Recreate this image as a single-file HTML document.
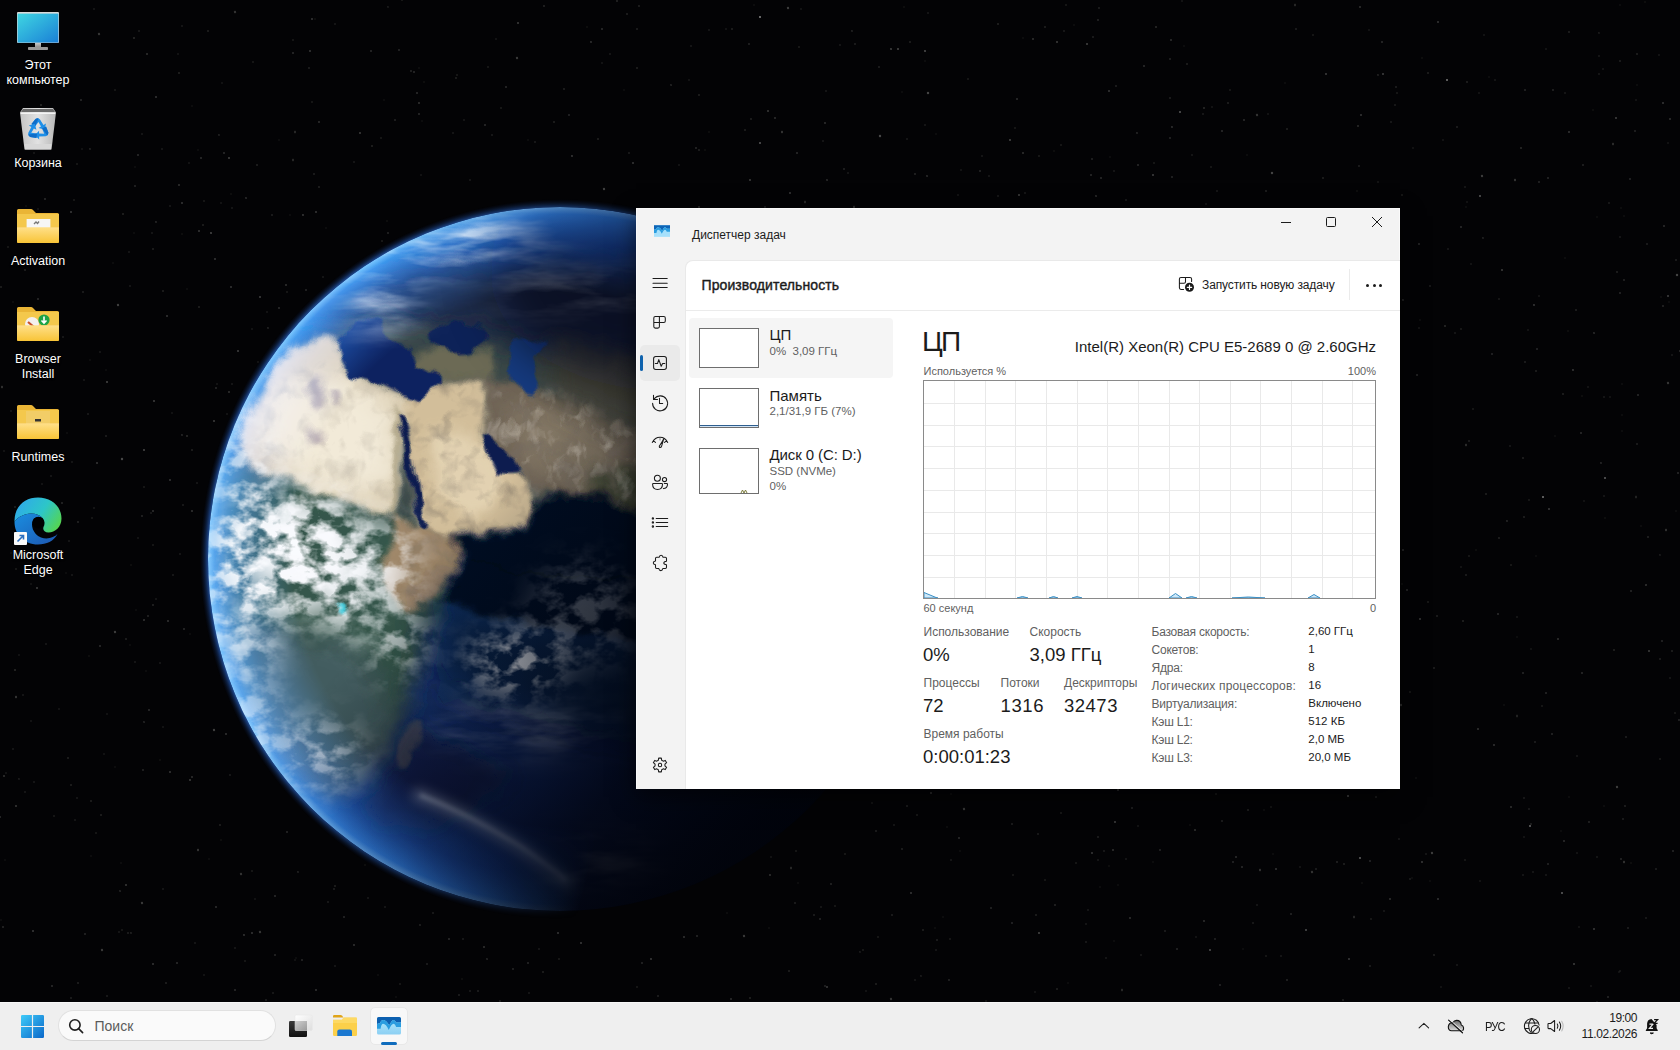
<!DOCTYPE html>
<html><head><meta charset="utf-8">
<style>
*{box-sizing:border-box;margin:0;padding:0}
html,body{width:1680px;height:1050px;overflow:hidden;background:#030305;font-family:"Liberation Sans",sans-serif}
.a{position:absolute;white-space:nowrap}
#earth{position:absolute;left:0;top:0}
/* window */
#win{position:absolute;left:636px;top:208px;width:764px;height:581px;background:#f3f3f3;border:1px solid #fafafa;border-bottom:0;box-shadow:0 8px 22px rgba(0,0,0,.55)}
.t{position:absolute;white-space:nowrap;color:#1b1b1b;line-height:1}
.g{color:#5f5f5f}
.dl{color:#fff;text-shadow:0 1px 2px rgba(0,0,0,.9)}
/* taskbar */
#tb{position:absolute;left:0;top:1002px;width:1680px;height:48px;background:#efefef;border-top:1px solid #f7f7f7}
</style></head><body>
<!--EARTH--><svg class="a" style="left:0;top:0" width="1680" height="1050" viewBox="0 0 1680 1050">
<defs>
<clipPath id="ec"><circle cx="560" cy="559" r="352"/></clipPath>
<radialGradient id="ocean" cx="330" cy="430" r="620" gradientUnits="userSpaceOnUse">
 <stop offset="0" stop-color="#1b4390"/><stop offset="0.45" stop-color="#173a82"/><stop offset="0.75" stop-color="#0d2260"/><stop offset="1" stop-color="#050c28"/>
</radialGradient>
<linearGradient id="night" x1="360" y1="380" x2="800" y2="780" gradientUnits="userSpaceOnUse">
 <stop offset="0.3" stop-color="#01030a" stop-opacity="0"/>
 <stop offset="0.52" stop-color="#01030a" stop-opacity="0.4"/>
 <stop offset="0.78" stop-color="#01030a" stop-opacity="0.82"/>
 <stop offset="1" stop-color="#01030a" stop-opacity="0.95"/>
</linearGradient>
<radialGradient id="limb" cx="560" cy="559" r="352" gradientUnits="userSpaceOnUse">
 <stop offset="0.76" stop-color="#1e5ac0" stop-opacity="0"/>
 <stop offset="0.9" stop-color="#1e5ac0" stop-opacity="0.6"/>
 <stop offset="0.98" stop-color="#2f80e8" stop-opacity="0.95"/>
 <stop offset="1" stop-color="#6fb8ff" stop-opacity="1"/>
</radialGradient>
<radialGradient id="glow" cx="560" cy="559" r="360" gradientUnits="userSpaceOnUse">
 <stop offset="0.975" stop-color="#2a6ad0" stop-opacity="0.85"/>
 <stop offset="1" stop-color="#0a1a40" stop-opacity="0"/>
</radialGradient>
<linearGradient id="litmask" x1="260" y1="520" x2="700" y2="640" gradientUnits="userSpaceOnUse">
 <stop offset="0.1" stop-color="#fff"/><stop offset="0.5" stop-color="#fff" stop-opacity="0.6"/><stop offset="0.9" stop-color="#fff" stop-opacity="0"/>
</linearGradient>
<mask id="lit"><rect x="0" y="0" width="1680" height="1050" fill="url(#litmask)"/></mask>
<filter id="disp" x="150" y="150" width="800" height="800" filterUnits="userSpaceOnUse">
 <feTurbulence type="fractalNoise" baseFrequency="0.04" numOctaves="3" seed="2" result="t"/>
 <feDisplacementMap in="SourceGraphic" in2="t" scale="16" xChannelSelector="R" yChannelSelector="G"/>
</filter>
<filter id="b1s" x="0" y="0" width="1680" height="1050" filterUnits="userSpaceOnUse"><feGaussianBlur stdDeviation=".5"/></filter>
<filter id="reliefL" x="150" y="150" width="800" height="800" filterUnits="userSpaceOnUse">
 <feGaussianBlur in="SourceGraphic" stdDeviation="6" result="m"/>
 <feTurbulence type="fractalNoise" baseFrequency="0.07 0.05" numOctaves="3" seed="9" result="n"/>
 <feColorMatrix in="n" type="matrix" values="0 0 0 0 0.85  0 0 0 0 0.8  0 0 0 0 0.72  2.6 0 0 0 -1.35" result="c"/>
 <feComposite in="c" in2="m" operator="in"/>
</filter>
<filter id="b1"><feGaussianBlur stdDeviation="1"/></filter>
<filter id="b2" x="-20%" y="-20%" width="140%" height="140%"><feGaussianBlur stdDeviation="2"/></filter>
<filter id="b3" x="-20%" y="-20%" width="140%" height="140%"><feGaussianBlur stdDeviation="3"/></filter>
<filter id="b6" x="-30%" y="-30%" width="160%" height="160%"><feGaussianBlur stdDeviation="6"/></filter>
<filter id="b12" x="-50%" y="-50%" width="200%" height="200%"><feGaussianBlur stdDeviation="12"/></filter>
<filter id="b24" x="-50%" y="-50%" width="200%" height="200%"><feGaussianBlur stdDeviation="24"/></filter>
<filter id="cloudtex" x="150" y="150" width="800" height="800" filterUnits="userSpaceOnUse">
 <feGaussianBlur in="SourceGraphic" stdDeviation="18" result="m"/>
 <feTurbulence type="fractalNoise" baseFrequency="0.045 0.06" numOctaves="4" seed="11" result="n"/>
 <feColorMatrix in="n" type="matrix" values="0 0 0 0 0.94  0 0 0 0 0.95  0 0 0 0 0.98  4.2 0 0 0 -1.75" result="c"/>
 <feComposite in="c" in2="m" operator="in"/>
</filter>
<filter id="cloudtex2" x="150" y="150" width="800" height="800" filterUnits="userSpaceOnUse">
 <feGaussianBlur in="SourceGraphic" stdDeviation="16" result="m"/>
 <feTurbulence type="fractalNoise" baseFrequency="0.04 0.055" numOctaves="4" seed="23" result="n"/>
 <feColorMatrix in="n" type="matrix" values="0 0 0 0 0.95  0 0 0 0 0.96  0 0 0 0 0.99  4.0 0 0 0 -1.55" result="c"/>
 <feComposite in="c" in2="m" operator="in"/>
</filter>
<filter id="streaks" x="150" y="150" width="800" height="800" filterUnits="userSpaceOnUse">
 <feGaussianBlur in="SourceGraphic" stdDeviation="16" result="m"/>
 <feTurbulence type="fractalNoise" baseFrequency="0.012 0.05" numOctaves="4" seed="4" result="n"/>
 <feColorMatrix in="n" type="matrix" values="0 0 0 0 0.85  0 0 0 0 0.9  0 0 0 0 0.98  3 0 0 0 -1.25" result="c"/>
 <feComposite in="c" in2="m" operator="in"/>
</filter>
<filter id="relief" x="150" y="150" width="800" height="800" filterUnits="userSpaceOnUse">
 <feGaussianBlur in="SourceGraphic" stdDeviation="4" result="m"/>
 <feTurbulence type="fractalNoise" baseFrequency="0.05" numOctaves="3" seed="5" result="n"/>
 <feColorMatrix in="n" type="matrix" values="0 0 0 0 0.18  0 0 0 0 0.15  0 0 0 0 0.12  2.0 0 0 0 -0.95" result="c"/>
 <feComposite in="c" in2="m" operator="in"/>
</filter>
</defs>
<g filter="url(#b1s)"><circle cx="1074" cy="25" r="0.8" fill="rgb(29,29,29)"/><circle cx="1237" cy="678" r="0.7" fill="rgb(57,57,57)"/><circle cx="709" cy="30" r="1.0" fill="rgb(27,27,27)"/><circle cx="45" cy="199" r="1.0" fill="rgb(43,43,43)"/><circle cx="1360" cy="7" r="1.0" fill="rgb(51,51,51)"/><circle cx="572" cy="156" r="0.9" fill="rgb(63,63,63)"/><circle cx="156" cy="97" r="1.0" fill="rgb(53,53,53)"/><circle cx="1356" cy="731" r="1.2" fill="rgb(38,38,38)"/><circle cx="1393" cy="620" r="1.0" fill="rgb(54,54,54)"/><circle cx="1184" cy="46" r="0.8" fill="rgb(27,27,27)"/><circle cx="134" cy="233" r="0.8" fill="rgb(23,23,23)"/><circle cx="1068" cy="366" r="0.8" fill="rgb(32,32,32)"/><circle cx="449" cy="939" r="1.0" fill="rgb(43,43,43)"/><circle cx="1662" cy="641" r="1.0" fill="rgb(39,39,39)"/><circle cx="1416" cy="778" r="0.7" fill="rgb(27,27,27)"/><circle cx="354" cy="945" r="0.9" fill="rgb(56,56,56)"/><circle cx="1101" cy="396" r="0.9" fill="rgb(59,59,59)"/><circle cx="943" cy="263" r="1.1" fill="rgb(40,40,40)"/><circle cx="1676" cy="511" r="0.7" fill="rgb(23,23,23)"/><circle cx="184" cy="629" r="0.9" fill="rgb(50,50,50)"/><circle cx="107" cy="382" r="1.0" fill="rgb(71,71,71)"/><circle cx="1631" cy="863" r="1.1" fill="rgb(19,19,19)"/><circle cx="1145" cy="538" r="1.0" fill="rgb(28,28,28)"/><circle cx="187" cy="436" r="1.2" fill="rgb(35,35,35)"/><circle cx="1471" cy="264" r="0.8" fill="rgb(36,36,36)"/><circle cx="1533" cy="872" r="1.0" fill="rgb(29,29,29)"/><circle cx="1023" cy="153" r="1.0" fill="rgb(48,48,48)"/><circle cx="1308" cy="531" r="0.9" fill="rgb(18,18,18)"/><circle cx="33" cy="931" r="1.1" fill="rgb(56,56,56)"/><circle cx="517" cy="58" r="1.2" fill="rgb(56,56,56)"/><circle cx="144" cy="487" r="1.1" fill="rgb(22,22,22)"/><circle cx="1287" cy="129" r="1.0" fill="rgb(35,35,35)"/><circle cx="711" cy="212" r="1.1" fill="rgb(38,38,38)"/><circle cx="1672" cy="651" r="1.0" fill="rgb(34,34,34)"/><circle cx="203" cy="225" r="1.0" fill="rgb(31,31,31)"/><circle cx="387" cy="221" r="1.0" fill="rgb(22,22,22)"/><circle cx="385" cy="907" r="0.7" fill="rgb(54,54,54)"/><circle cx="360" cy="133" r="1.0" fill="rgb(61,61,61)"/><circle cx="1357" cy="191" r="0.9" fill="rgb(23,23,23)"/><circle cx="1225" cy="675" r="0.7" fill="rgb(68,68,68)"/><circle cx="1448" cy="249" r="0.9" fill="rgb(26,26,26)"/><circle cx="420" cy="925" r="1.1" fill="rgb(34,34,34)"/><circle cx="925" cy="51" r="1.1" fill="rgb(73,73,73)"/><circle cx="1628" cy="928" r="0.8" fill="rgb(54,54,54)"/><circle cx="816" cy="214" r="0.7" fill="rgb(33,33,33)"/><circle cx="637" cy="987" r="1.1" fill="rgb(28,28,28)"/><circle cx="1608" cy="997" r="1.1" fill="rgb(39,39,39)"/><circle cx="260" cy="297" r="1.0" fill="rgb(65,65,65)"/><circle cx="911" cy="749" r="1.0" fill="rgb(22,22,22)"/><circle cx="845" cy="854" r="1.2" fill="rgb(25,25,25)"/><circle cx="135" cy="186" r="1.0" fill="rgb(40,40,40)"/><circle cx="395" cy="120" r="0.8" fill="rgb(57,57,57)"/><circle cx="999" cy="621" r="1.0" fill="rgb(33,33,33)"/><circle cx="878" cy="937" r="1.1" fill="rgb(26,26,26)"/><circle cx="1128" cy="301" r="1.1" fill="rgb(30,30,30)"/><circle cx="122" cy="459" r="1.2" fill="rgb(72,72,72)"/><circle cx="123" cy="214" r="1.2" fill="rgb(28,28,28)"/><circle cx="1480" cy="881" r="0.8" fill="rgb(32,32,32)"/><circle cx="1401" cy="705" r="1.2" fill="rgb(41,41,41)"/><circle cx="1099" cy="8" r="0.8" fill="rgb(51,51,51)"/><circle cx="1114" cy="941" r="0.8" fill="rgb(24,24,24)"/><circle cx="180" cy="554" r="1.0" fill="rgb(29,29,29)"/><circle cx="1206" cy="204" r="0.8" fill="rgb(42,42,42)"/><circle cx="821" cy="907" r="0.7" fill="rgb(53,53,53)"/><circle cx="6" cy="773" r="0.8" fill="rgb(42,42,42)"/><circle cx="1245" cy="553" r="0.7" fill="rgb(34,34,34)"/><circle cx="126" cy="885" r="1.0" fill="rgb(58,58,58)"/><circle cx="1402" cy="584" r="0.8" fill="rgb(25,25,25)"/><circle cx="1337" cy="862" r="0.8" fill="rgb(57,57,57)"/><circle cx="419" cy="103" r="1.1" fill="rgb(49,49,49)"/><circle cx="260" cy="932" r="1.2" fill="rgb(55,55,55)"/><circle cx="1362" cy="883" r="1.1" fill="rgb(20,20,20)"/><circle cx="558" cy="933" r="1.1" fill="rgb(51,51,51)"/><circle cx="1362" cy="267" r="0.8" fill="rgb(50,50,50)"/><circle cx="1465" cy="860" r="1.1" fill="rgb(27,27,27)"/><circle cx="1336" cy="228" r="0.8" fill="rgb(20,20,20)"/><circle cx="1624" cy="280" r="0.9" fill="rgb(42,42,42)"/><circle cx="1648" cy="537" r="0.8" fill="rgb(61,61,61)"/><circle cx="1630" cy="179" r="0.8" fill="rgb(64,64,64)"/><circle cx="182" cy="435" r="0.9" fill="rgb(46,46,46)"/><circle cx="1018" cy="512" r="1.0" fill="rgb(32,32,32)"/><circle cx="3" cy="927" r="1.1" fill="rgb(38,38,38)"/><circle cx="1246" cy="672" r="0.7" fill="rgb(32,32,32)"/><circle cx="1116" cy="331" r="1.1" fill="rgb(30,30,30)"/><circle cx="1209" cy="301" r="0.9" fill="rgb(30,30,30)"/><circle cx="214" cy="421" r="1.0" fill="rgb(61,61,61)"/><circle cx="1517" cy="617" r="1.0" fill="rgb(29,29,29)"/><circle cx="1" cy="287" r="1.0" fill="rgb(34,34,34)"/><circle cx="1100" cy="466" r="0.8" fill="rgb(34,34,34)"/><circle cx="795" cy="903" r="0.8" fill="rgb(50,50,50)"/><circle cx="142" cy="516" r="0.9" fill="rgb(42,42,42)"/><circle cx="1375" cy="753" r="0.8" fill="rgb(44,44,44)"/><circle cx="335" cy="24" r="0.9" fill="rgb(28,28,28)"/><circle cx="1428" cy="73" r="1.0" fill="rgb(33,33,33)"/><circle cx="831" cy="244" r="0.7" fill="rgb(43,43,43)"/><circle cx="1262" cy="772" r="0.9" fill="rgb(24,24,24)"/><circle cx="295" cy="960" r="0.7" fill="rgb(37,37,37)"/><circle cx="1122" cy="990" r="1.2" fill="rgb(40,40,40)"/><circle cx="1498" cy="614" r="1.0" fill="rgb(46,46,46)"/><circle cx="1395" cy="549" r="1.1" fill="rgb(57,57,57)"/><circle cx="797" cy="260" r="1.0" fill="rgb(28,28,28)"/><circle cx="1287" cy="522" r="0.8" fill="rgb(42,42,42)"/><circle cx="130" cy="286" r="0.9" fill="rgb(28,28,28)"/><circle cx="907" cy="139" r="1.0" fill="rgb(27,27,27)"/><circle cx="1187" cy="64" r="1.0" fill="rgb(33,33,33)"/><circle cx="699" cy="207" r="1.2" fill="rgb(33,33,33)"/><circle cx="981" cy="697" r="1.1" fill="rgb(54,54,54)"/><circle cx="639" cy="6" r="1.1" fill="rgb(31,31,31)"/><circle cx="1434" cy="955" r="1.1" fill="rgb(33,33,33)"/><circle cx="918" cy="604" r="0.8" fill="rgb(27,27,27)"/><circle cx="732" cy="29" r="1.0" fill="rgb(31,31,31)"/><circle cx="679" cy="165" r="0.8" fill="rgb(35,35,35)"/><circle cx="1045" cy="27" r="1.0" fill="rgb(33,33,33)"/><circle cx="46" cy="644" r="0.9" fill="rgb(24,24,24)"/><circle cx="84" cy="380" r="0.9" fill="rgb(27,27,27)"/><circle cx="1279" cy="380" r="1.1" fill="rgb(48,48,48)"/><circle cx="424" cy="82" r="1.0" fill="rgb(20,20,20)"/><circle cx="1680" cy="351" r="1.1" fill="rgb(43,43,43)"/><circle cx="1095" cy="756" r="0.8" fill="rgb(62,62,62)"/><circle cx="34" cy="153" r="1.0" fill="rgb(24,24,24)"/><circle cx="947" cy="218" r="1.1" fill="rgb(45,45,45)"/><circle cx="1257" cy="115" r="1.2" fill="rgb(52,52,52)"/><circle cx="182" cy="26" r="1.0" fill="rgb(30,30,30)"/><circle cx="1610" cy="397" r="0.7" fill="rgb(46,46,46)"/><circle cx="1160" cy="628" r="1.1" fill="rgb(23,23,23)"/><circle cx="1428" cy="602" r="1.2" fill="rgb(24,24,24)"/><circle cx="1315" cy="348" r="0.9" fill="rgb(34,34,34)"/><circle cx="850" cy="342" r="1.1" fill="rgb(54,54,54)"/><circle cx="177" cy="963" r="1.1" fill="rgb(42,42,42)"/><circle cx="1188" cy="436" r="1.2" fill="rgb(47,47,47)"/><circle cx="1396" cy="87" r="0.8" fill="rgb(56,56,56)"/><circle cx="637" cy="29" r="0.8" fill="rgb(54,54,54)"/><circle cx="1178" cy="277" r="1.2" fill="rgb(19,19,19)"/><circle cx="144" cy="722" r="1.1" fill="rgb(36,36,36)"/><circle cx="1160" cy="647" r="1.1" fill="rgb(36,36,36)"/><circle cx="156" cy="222" r="0.9" fill="rgb(45,45,45)"/><circle cx="977" cy="474" r="0.9" fill="rgb(38,38,38)"/><circle cx="1253" cy="331" r="0.8" fill="rgb(45,45,45)"/><circle cx="422" cy="121" r="0.8" fill="rgb(26,26,26)"/><circle cx="900" cy="764" r="0.8" fill="rgb(26,26,26)"/><circle cx="1641" cy="526" r="0.8" fill="rgb(29,29,29)"/><circle cx="326" cy="228" r="0.7" fill="rgb(26,26,26)"/><circle cx="897" cy="275" r="1.0" fill="rgb(66,66,66)"/><circle cx="1172" cy="127" r="0.9" fill="rgb(55,55,55)"/><circle cx="1466" cy="575" r="0.9" fill="rgb(35,35,35)"/><circle cx="310" cy="51" r="0.9" fill="rgb(61,61,61)"/><circle cx="1381" cy="402" r="1.0" fill="rgb(23,23,23)"/><circle cx="90" cy="149" r="0.9" fill="rgb(39,39,39)"/><circle cx="1670" cy="119" r="1.0" fill="rgb(48,48,48)"/><circle cx="1328" cy="226" r="0.9" fill="rgb(37,37,37)"/><circle cx="1663" cy="306" r="1.0" fill="rgb(41,41,41)"/><circle cx="1243" cy="949" r="0.8" fill="rgb(27,27,27)"/><circle cx="1110" cy="157" r="0.7" fill="rgb(25,25,25)"/><circle cx="4" cy="451" r="0.8" fill="rgb(40,40,40)"/><circle cx="1181" cy="455" r="1.2" fill="rgb(44,44,44)"/><circle cx="1324" cy="626" r="1.2" fill="rgb(43,43,43)"/><circle cx="1088" cy="910" r="0.7" fill="rgb(52,52,52)"/><circle cx="279" cy="308" r="1.0" fill="rgb(47,47,47)"/><circle cx="485" cy="125" r="1.0" fill="rgb(44,44,44)"/><circle cx="1584" cy="501" r="0.7" fill="rgb(36,36,36)"/><circle cx="67" cy="433" r="0.8" fill="rgb(30,30,30)"/><circle cx="153" cy="964" r="1.0" fill="rgb(53,53,53)"/><circle cx="1597" cy="1002" r="0.8" fill="rgb(44,44,44)"/><circle cx="68" cy="758" r="1.0" fill="rgb(35,35,35)"/><circle cx="1539" cy="182" r="1.0" fill="rgb(40,40,40)"/><circle cx="826" cy="91" r="0.9" fill="rgb(31,31,31)"/><circle cx="1126" cy="859" r="1.0" fill="rgb(30,30,30)"/><circle cx="484" cy="947" r="1.0" fill="rgb(51,51,51)"/><circle cx="543" cy="972" r="1.0" fill="rgb(33,33,33)"/><circle cx="1660" cy="659" r="0.9" fill="rgb(38,38,38)"/><circle cx="1271" cy="627" r="0.8" fill="rgb(48,48,48)"/><circle cx="923" cy="930" r="1.0" fill="rgb(34,34,34)"/><circle cx="204" cy="975" r="0.8" fill="rgb(41,41,41)"/><circle cx="928" cy="93" r="1.2" fill="rgb(70,70,70)"/><circle cx="775" cy="118" r="0.9" fill="rgb(52,52,52)"/><circle cx="1204" cy="510" r="1.1" fill="rgb(29,29,29)"/><circle cx="1647" cy="244" r="0.9" fill="rgb(38,38,38)"/><circle cx="1549" cy="509" r="1.1" fill="rgb(56,56,56)"/><circle cx="697" cy="936" r="1.1" fill="rgb(37,37,37)"/><circle cx="986" cy="1001" r="0.8" fill="rgb(36,36,36)"/><circle cx="905" cy="346" r="1.0" fill="rgb(38,38,38)"/><circle cx="961" cy="234" r="0.7" fill="rgb(49,49,49)"/><circle cx="1251" cy="707" r="0.9" fill="rgb(51,51,51)"/><circle cx="1115" cy="822" r="0.9" fill="rgb(67,67,67)"/><circle cx="62" cy="503" r="1.1" fill="rgb(40,40,40)"/><circle cx="1469" cy="441" r="0.9" fill="rgb(37,37,37)"/><circle cx="1214" cy="411" r="0.8" fill="rgb(43,43,43)"/><circle cx="789" cy="971" r="1.0" fill="rgb(31,31,31)"/><circle cx="1092" cy="853" r="1.1" fill="rgb(54,54,54)"/><circle cx="1207" cy="761" r="0.7" fill="rgb(55,55,55)"/><circle cx="115" cy="632" r="1.2" fill="rgb(59,59,59)"/><circle cx="1255" cy="435" r="1.0" fill="rgb(23,23,23)"/><circle cx="1466" cy="445" r="1.2" fill="rgb(45,45,45)"/><circle cx="77" cy="798" r="0.9" fill="rgb(29,29,29)"/><circle cx="951" cy="794" r="0.7" fill="rgb(25,25,25)"/><circle cx="1463" cy="621" r="1.2" fill="rgb(28,28,28)"/><circle cx="16" cy="806" r="1.0" fill="rgb(58,58,58)"/><circle cx="1073" cy="425" r="1.1" fill="rgb(28,28,28)"/><circle cx="812" cy="238" r="1.0" fill="rgb(39,39,39)"/><circle cx="1668" cy="296" r="1.0" fill="rgb(66,66,66)"/><circle cx="1152" cy="746" r="1.0" fill="rgb(22,22,22)"/><circle cx="835" cy="906" r="1.1" fill="rgb(29,29,29)"/><circle cx="1020" cy="353" r="1.0" fill="rgb(42,42,42)"/><circle cx="1139" cy="722" r="1.1" fill="rgb(43,43,43)"/><circle cx="1055" cy="905" r="0.9" fill="rgb(42,42,42)"/><circle cx="1230" cy="90" r="1.1" fill="rgb(29,29,29)"/><circle cx="295" cy="132" r="1.2" fill="rgb(38,38,38)"/><circle cx="892" cy="915" r="0.8" fill="rgb(52,52,52)"/><circle cx="1385" cy="483" r="1.1" fill="rgb(51,51,51)"/><circle cx="569" cy="115" r="0.8" fill="rgb(64,64,64)"/><circle cx="1624" cy="862" r="1.2" fill="rgb(46,46,46)"/><circle cx="1625" cy="806" r="1.1" fill="rgb(32,32,32)"/><circle cx="23" cy="538" r="1.0" fill="rgb(35,35,35)"/><circle cx="1130" cy="586" r="1.2" fill="rgb(52,52,52)"/><circle cx="182" cy="234" r="1.1" fill="rgb(20,20,20)"/><circle cx="943" cy="917" r="0.7" fill="rgb(27,27,27)"/><circle cx="1384" cy="911" r="0.9" fill="rgb(29,29,29)"/><circle cx="235" cy="948" r="0.9" fill="rgb(30,30,30)"/><circle cx="163" cy="889" r="0.9" fill="rgb(24,24,24)"/><circle cx="1126" cy="745" r="0.9" fill="rgb(62,62,62)"/><circle cx="1247" cy="155" r="0.7" fill="rgb(33,33,33)"/><circle cx="1599" cy="33" r="0.9" fill="rgb(32,32,32)"/><circle cx="1597" cy="857" r="1.0" fill="rgb(23,23,23)"/><circle cx="915" cy="980" r="0.9" fill="rgb(31,31,31)"/><circle cx="319" cy="122" r="0.9" fill="rgb(53,53,53)"/><circle cx="1113" cy="643" r="0.7" fill="rgb(40,40,40)"/><circle cx="1322" cy="244" r="1.0" fill="rgb(24,24,24)"/><circle cx="115" cy="767" r="0.8" fill="rgb(26,26,26)"/><circle cx="1461" cy="329" r="1.2" fill="rgb(25,25,25)"/><circle cx="5" cy="860" r="0.8" fill="rgb(25,25,25)"/><circle cx="421" cy="175" r="0.7" fill="rgb(43,43,43)"/><circle cx="25" cy="792" r="0.9" fill="rgb(27,27,27)"/><circle cx="293" cy="53" r="1.0" fill="rgb(47,47,47)"/><circle cx="1253" cy="477" r="1.0" fill="rgb(49,49,49)"/><circle cx="183" cy="505" r="0.7" fill="rgb(62,62,62)"/><circle cx="1316" cy="869" r="0.9" fill="rgb(37,37,37)"/><circle cx="1620" cy="61" r="0.9" fill="rgb(36,36,36)"/><circle cx="1153" cy="491" r="0.7" fill="rgb(58,58,58)"/><circle cx="136" cy="610" r="0.8" fill="rgb(22,22,22)"/><circle cx="1064" cy="549" r="1.2" fill="rgb(30,30,30)"/><circle cx="1017" cy="99" r="1.1" fill="rgb(45,45,45)"/><circle cx="1094" cy="771" r="0.8" fill="rgb(46,46,46)"/><circle cx="759" cy="229" r="0.9" fill="rgb(31,31,31)"/><circle cx="699" cy="95" r="1.0" fill="rgb(34,34,34)"/><circle cx="629" cy="153" r="0.7" fill="rgb(60,60,60)"/><circle cx="1397" cy="93" r="1.1" fill="rgb(23,23,23)"/><circle cx="1364" cy="557" r="1.0" fill="rgb(40,40,40)"/><circle cx="554" cy="122" r="1.0" fill="rgb(31,31,31)"/><circle cx="1260" cy="870" r="1.2" fill="rgb(46,46,46)"/><circle cx="1009" cy="352" r="0.8" fill="rgb(39,39,39)"/><circle cx="1103" cy="225" r="1.1" fill="rgb(24,24,24)"/><circle cx="964" cy="809" r="1.2" fill="rgb(53,53,53)"/><circle cx="1375" cy="615" r="0.7" fill="rgb(42,42,42)"/><circle cx="1561" cy="831" r="0.8" fill="rgb(28,28,28)"/><circle cx="1181" cy="310" r="0.7" fill="rgb(31,31,31)"/><circle cx="1461" cy="567" r="0.8" fill="rgb(33,33,33)"/><circle cx="1064" cy="31" r="0.8" fill="rgb(47,47,47)"/><circle cx="1305" cy="569" r="0.7" fill="rgb(23,23,23)"/><circle cx="1132" cy="273" r="0.9" fill="rgb(43,43,43)"/><circle cx="1268" cy="114" r="0.8" fill="rgb(34,34,34)"/><circle cx="1140" cy="488" r="0.7" fill="rgb(43,43,43)"/><circle cx="13" cy="302" r="0.8" fill="rgb(27,27,27)"/><circle cx="13" cy="749" r="0.9" fill="rgb(26,26,26)"/><circle cx="1182" cy="501" r="1.1" fill="rgb(52,52,52)"/><circle cx="121" cy="863" r="0.7" fill="rgb(21,21,21)"/><circle cx="1548" cy="864" r="1.0" fill="rgb(39,39,39)"/><circle cx="1192" cy="419" r="0.7" fill="rgb(24,24,24)"/><circle cx="1038" cy="834" r="0.7" fill="rgb(59,59,59)"/><circle cx="1419" cy="244" r="1.0" fill="rgb(40,40,40)"/><circle cx="192" cy="511" r="0.9" fill="rgb(58,58,58)"/><circle cx="1222" cy="821" r="0.8" fill="rgb(51,51,51)"/><circle cx="246" cy="198" r="1.1" fill="rgb(41,41,41)"/><circle cx="1101" cy="178" r="0.9" fill="rgb(49,49,49)"/><circle cx="1267" cy="761" r="1.2" fill="rgb(34,34,34)"/><circle cx="948" cy="637" r="1.1" fill="rgb(41,41,41)"/><circle cx="1054" cy="151" r="0.9" fill="rgb(22,22,22)"/><circle cx="94" cy="508" r="0.9" fill="rgb(30,30,30)"/><circle cx="96" cy="833" r="1.1" fill="rgb(23,23,23)"/><circle cx="1437" cy="616" r="0.9" fill="rgb(37,37,37)"/><circle cx="931" cy="793" r="0.9" fill="rgb(57,57,57)"/><circle cx="1360" cy="653" r="0.9" fill="rgb(30,30,30)"/><circle cx="253" cy="62" r="1.1" fill="rgb(23,23,23)"/><circle cx="848" cy="173" r="0.9" fill="rgb(28,28,28)"/><circle cx="1326" cy="649" r="0.7" fill="rgb(22,22,22)"/><circle cx="1140" cy="285" r="1.0" fill="rgb(46,46,46)"/><circle cx="1523" cy="875" r="1.0" fill="rgb(30,30,30)"/><circle cx="238" cy="351" r="1.0" fill="rgb(65,65,65)"/><circle cx="1576" cy="310" r="1.1" fill="rgb(32,32,32)"/><circle cx="1366" cy="671" r="1.1" fill="rgb(52,52,52)"/><circle cx="1151" cy="527" r="0.9" fill="rgb(42,42,42)"/><circle cx="303" cy="215" r="0.9" fill="rgb(62,62,62)"/><circle cx="381" cy="138" r="1.1" fill="rgb(23,23,23)"/><circle cx="170" cy="772" r="1.1" fill="rgb(53,53,53)"/><circle cx="63" cy="337" r="0.8" fill="rgb(48,48,48)"/><circle cx="633" cy="163" r="1.1" fill="rgb(52,52,52)"/><circle cx="1359" cy="166" r="0.9" fill="rgb(34,34,34)"/><circle cx="1136" cy="238" r="0.8" fill="rgb(34,34,34)"/><circle cx="1258" cy="450" r="0.9" fill="rgb(38,38,38)"/><circle cx="1358" cy="470" r="0.9" fill="rgb(53,53,53)"/><circle cx="1591" cy="986" r="0.8" fill="rgb(35,35,35)"/><circle cx="1623" cy="819" r="0.8" fill="rgb(50,50,50)"/><circle cx="1469" cy="556" r="1.1" fill="rgb(23,23,23)"/><circle cx="1430" cy="286" r="0.8" fill="rgb(48,48,48)"/><circle cx="1521" cy="148" r="1.2" fill="rgb(34,34,34)"/><circle cx="587" cy="27" r="1.0" fill="rgb(22,22,22)"/><circle cx="396" cy="997" r="0.7" fill="rgb(32,32,32)"/><circle cx="1564" cy="841" r="1.1" fill="rgb(43,43,43)"/><circle cx="231" cy="287" r="1.0" fill="rgb(52,52,52)"/><circle cx="754" cy="5" r="0.8" fill="rgb(23,23,23)"/><circle cx="1403" cy="550" r="1.0" fill="rgb(46,46,46)"/><circle cx="187" cy="289" r="0.7" fill="rgb(29,29,29)"/><circle cx="768" cy="111" r="1.0" fill="rgb(58,58,58)"/><circle cx="28" cy="516" r="0.8" fill="rgb(28,28,28)"/><circle cx="1116" cy="86" r="0.7" fill="rgb(66,66,66)"/><circle cx="1660" cy="555" r="0.9" fill="rgb(32,32,32)"/><circle cx="1068" cy="983" r="0.7" fill="rgb(28,28,28)"/><circle cx="1325" cy="345" r="1.0" fill="rgb(47,47,47)"/><circle cx="1296" cy="737" r="0.7" fill="rgb(30,30,30)"/><circle cx="917" cy="815" r="1.1" fill="rgb(26,26,26)"/><circle cx="1061" cy="813" r="1.1" fill="rgb(22,22,22)"/><circle cx="74" cy="200" r="1.2" fill="rgb(21,21,21)"/><circle cx="866" cy="991" r="0.8" fill="rgb(38,38,38)"/><circle cx="1266" cy="191" r="1.1" fill="rgb(31,31,31)"/><circle cx="1455" cy="333" r="0.9" fill="rgb(24,24,24)"/><circle cx="1494" cy="745" r="0.9" fill="rgb(57,57,57)"/><circle cx="1636" cy="497" r="1.2" fill="rgb(36,36,36)"/><circle cx="872" cy="803" r="0.7" fill="rgb(46,46,46)"/><circle cx="1012" cy="824" r="0.9" fill="rgb(38,38,38)"/><circle cx="135" cy="662" r="1.0" fill="rgb(30,30,30)"/><circle cx="591" cy="42" r="0.9" fill="rgb(55,55,55)"/><circle cx="1677" cy="275" r="1.2" fill="rgb(67,67,67)"/><circle cx="126" cy="639" r="1.1" fill="rgb(31,31,31)"/><circle cx="1141" cy="955" r="1.0" fill="rgb(25,25,25)"/><circle cx="1313" cy="35" r="1.1" fill="rgb(22,22,22)"/><circle cx="953" cy="606" r="1.2" fill="rgb(44,44,44)"/><circle cx="964" cy="531" r="1.0" fill="rgb(33,33,33)"/><circle cx="419" cy="114" r="0.9" fill="rgb(47,47,47)"/><circle cx="750" cy="998" r="1.2" fill="rgb(29,29,29)"/><circle cx="825" cy="123" r="0.9" fill="rgb(54,54,54)"/><circle cx="1510" cy="446" r="1.0" fill="rgb(23,23,23)"/><circle cx="1420" cy="320" r="0.7" fill="rgb(31,31,31)"/><circle cx="911" cy="893" r="1.1" fill="rgb(54,54,54)"/><circle cx="1558" cy="639" r="1.0" fill="rgb(50,50,50)"/><circle cx="204" cy="201" r="1.1" fill="rgb(24,24,24)"/><circle cx="44" cy="555" r="1.1" fill="rgb(32,32,32)"/><circle cx="927" cy="613" r="0.9" fill="rgb(23,23,23)"/><circle cx="1679" cy="720" r="1.1" fill="rgb(37,37,37)"/><circle cx="1383" cy="74" r="1.0" fill="rgb(66,66,66)"/><circle cx="1311" cy="641" r="1.2" fill="rgb(26,26,26)"/><circle cx="727" cy="913" r="0.8" fill="rgb(22,22,22)"/><circle cx="257" cy="165" r="1.1" fill="rgb(30,30,30)"/><circle cx="581" cy="943" r="1.1" fill="rgb(57,57,57)"/><circle cx="925" cy="125" r="1.0" fill="rgb(29,29,29)"/><circle cx="844" cy="169" r="0.8" fill="rgb(61,61,61)"/><circle cx="1107" cy="722" r="1.1" fill="rgb(41,41,41)"/><circle cx="947" cy="827" r="0.7" fill="rgb(21,21,21)"/><circle cx="1078" cy="578" r="1.1" fill="rgb(43,43,43)"/><circle cx="487" cy="959" r="1.1" fill="rgb(36,36,36)"/><circle cx="1151" cy="298" r="0.7" fill="rgb(22,22,22)"/><circle cx="1233" cy="862" r="0.8" fill="rgb(66,66,66)"/><circle cx="163" cy="291" r="1.0" fill="rgb(32,32,32)"/><circle cx="268" cy="328" r="0.9" fill="rgb(39,39,39)"/><circle cx="1282" cy="499" r="0.9" fill="rgb(37,37,37)"/><circle cx="518" cy="23" r="1.0" fill="rgb(62,62,62)"/><circle cx="1624" cy="216" r="0.7" fill="rgb(31,31,31)"/><circle cx="831" cy="884" r="0.9" fill="rgb(43,43,43)"/><circle cx="902" cy="849" r="1.1" fill="rgb(34,34,34)"/><circle cx="1222" cy="765" r="0.9" fill="rgb(32,32,32)"/><circle cx="958" cy="195" r="0.7" fill="rgb(38,38,38)"/><circle cx="470" cy="991" r="0.8" fill="rgb(44,44,44)"/><circle cx="1638" cy="395" r="0.9" fill="rgb(50,50,50)"/><circle cx="1577" cy="756" r="1.0" fill="rgb(26,26,26)"/><circle cx="840" cy="45" r="0.9" fill="rgb(24,24,24)"/><circle cx="1019" cy="517" r="1.0" fill="rgb(30,30,30)"/><circle cx="273" cy="993" r="0.8" fill="rgb(47,47,47)"/><circle cx="894" cy="710" r="1.1" fill="rgb(29,29,29)"/><circle cx="1646" cy="585" r="1.1" fill="rgb(50,50,50)"/><circle cx="1156" cy="27" r="1.2" fill="rgb(35,35,35)"/><circle cx="1315" cy="778" r="1.1" fill="rgb(39,39,39)"/><circle cx="980" cy="171" r="1.0" fill="rgb(42,42,42)"/><circle cx="1413" cy="148" r="0.7" fill="rgb(44,44,44)"/><circle cx="1593" cy="110" r="0.9" fill="rgb(20,20,20)"/><circle cx="1546" cy="875" r="0.7" fill="rgb(47,47,47)"/><circle cx="232" cy="208" r="1.0" fill="rgb(30,30,30)"/><circle cx="883" cy="314" r="1.2" fill="rgb(25,25,25)"/><circle cx="1297" cy="722" r="1.0" fill="rgb(42,42,42)"/><circle cx="1025" cy="193" r="1.0" fill="rgb(28,28,28)"/><circle cx="378" cy="975" r="0.8" fill="rgb(29,29,29)"/><circle cx="1569" cy="797" r="0.8" fill="rgb(29,29,29)"/><circle cx="1137" cy="380" r="1.1" fill="rgb(67,67,67)"/><circle cx="1604" cy="806" r="0.8" fill="rgb(29,29,29)"/><circle cx="1200" cy="347" r="0.8" fill="rgb(34,34,34)"/><circle cx="805" cy="202" r="1.2" fill="rgb(38,38,38)"/><circle cx="1170" cy="138" r="1.0" fill="rgb(41,41,41)"/><circle cx="88" cy="414" r="0.8" fill="rgb(46,46,46)"/><circle cx="1295" cy="5" r="1.2" fill="rgb(38,38,38)"/><circle cx="684" cy="937" r="0.9" fill="rgb(56,56,56)"/><circle cx="335" cy="966" r="1.0" fill="rgb(30,30,30)"/><circle cx="1525" cy="90" r="1.0" fill="rgb(39,39,39)"/><circle cx="1215" cy="939" r="0.8" fill="rgb(59,59,59)"/><circle cx="1482" cy="176" r="1.2" fill="rgb(59,59,59)"/><circle cx="1574" cy="964" r="1.1" fill="rgb(60,60,60)"/><circle cx="16" cy="569" r="1.2" fill="rgb(24,24,24)"/><circle cx="478" cy="991" r="0.9" fill="rgb(38,38,38)"/><circle cx="1577" cy="853" r="0.8" fill="rgb(35,35,35)"/><circle cx="189" cy="163" r="0.8" fill="rgb(35,35,35)"/><circle cx="1328" cy="569" r="0.8" fill="rgb(48,48,48)"/><circle cx="1438" cy="899" r="1.0" fill="rgb(52,52,52)"/><circle cx="146" cy="671" r="0.8" fill="rgb(26,26,26)"/><circle cx="1266" cy="956" r="1.1" fill="rgb(29,29,29)"/><circle cx="19" cy="655" r="0.7" fill="rgb(45,45,45)"/><circle cx="199" cy="307" r="1.0" fill="rgb(33,33,33)"/><circle cx="1504" cy="705" r="0.8" fill="rgb(30,30,30)"/><circle cx="1539" cy="296" r="0.8" fill="rgb(41,41,41)"/><circle cx="224" cy="153" r="1.0" fill="rgb(47,47,47)"/><circle cx="1116" cy="219" r="1.1" fill="rgb(28,28,28)"/><circle cx="1467" cy="82" r="1.1" fill="rgb(34,34,34)"/><circle cx="131" cy="565" r="1.0" fill="rgb(22,22,22)"/><circle cx="252" cy="329" r="0.8" fill="rgb(37,37,37)"/><circle cx="153" cy="511" r="0.9" fill="rgb(51,51,51)"/><circle cx="97" cy="463" r="1.1" fill="rgb(51,51,51)"/><circle cx="1253" cy="579" r="0.9" fill="rgb(21,21,21)"/><circle cx="107" cy="996" r="0.7" fill="rgb(61,61,61)"/><circle cx="1569" cy="32" r="1.1" fill="rgb(33,33,33)"/><circle cx="1287" cy="980" r="0.9" fill="rgb(42,42,42)"/><circle cx="1668" cy="383" r="1.2" fill="rgb(55,55,55)"/><circle cx="1112" cy="540" r="0.9" fill="rgb(43,43,43)"/><circle cx="888" cy="729" r="0.7" fill="rgb(27,27,27)"/><circle cx="38" cy="299" r="1.0" fill="rgb(44,44,44)"/><circle cx="894" cy="825" r="0.9" fill="rgb(28,28,28)"/><circle cx="463" cy="939" r="0.8" fill="rgb(46,46,46)"/><circle cx="1360" cy="420" r="1.1" fill="rgb(48,48,48)"/><circle cx="26" cy="206" r="0.7" fill="rgb(23,23,23)"/><circle cx="1004" cy="705" r="1.1" fill="rgb(22,22,22)"/><circle cx="365" cy="865" r="1.0" fill="rgb(22,22,22)"/><circle cx="1229" cy="320" r="1.0" fill="rgb(40,40,40)"/><circle cx="102" cy="950" r="1.2" fill="rgb(56,56,56)"/><circle cx="1052" cy="428" r="1.2" fill="rgb(36,36,36)"/><circle cx="1582" cy="673" r="0.9" fill="rgb(50,50,50)"/><circle cx="699" cy="150" r="1.1" fill="rgb(32,32,32)"/><circle cx="796" cy="851" r="1.1" fill="rgb(29,29,29)"/><circle cx="1354" cy="917" r="1.2" fill="rgb(39,39,39)"/><circle cx="936" cy="134" r="0.8" fill="rgb(28,28,28)"/><circle cx="1086" cy="924" r="0.7" fill="rgb(53,53,53)"/><circle cx="1217" cy="191" r="1.0" fill="rgb(28,28,28)"/><circle cx="1013" cy="875" r="1.1" fill="rgb(26,26,26)"/><circle cx="1217" cy="560" r="1.1" fill="rgb(36,36,36)"/><circle cx="559" cy="959" r="1.2" fill="rgb(20,20,20)"/><circle cx="1616" cy="118" r="0.9" fill="rgb(73,73,73)"/><circle cx="344" cy="917" r="1.1" fill="rgb(38,38,38)"/><circle cx="166" cy="983" r="1.1" fill="rgb(35,35,35)"/><circle cx="1536" cy="371" r="1.0" fill="rgb(33,33,33)"/><circle cx="372" cy="146" r="1.2" fill="rgb(28,28,28)"/><circle cx="973" cy="418" r="0.9" fill="rgb(25,25,25)"/><circle cx="1151" cy="258" r="1.2" fill="rgb(52,52,52)"/><circle cx="1078" cy="492" r="1.1" fill="rgb(25,25,25)"/><circle cx="820" cy="919" r="1.0" fill="rgb(38,38,38)"/><circle cx="99" cy="34" r="1.2" fill="rgb(53,53,53)"/><circle cx="1123" cy="766" r="1.1" fill="rgb(33,33,33)"/><circle cx="15" cy="507" r="1.0" fill="rgb(32,32,32)"/><circle cx="1120" cy="618" r="0.9" fill="rgb(36,36,36)"/><circle cx="11" cy="553" r="1.0" fill="rgb(20,20,20)"/><circle cx="462" cy="979" r="1.1" fill="rgb(20,20,20)"/><circle cx="1132" cy="808" r="0.8" fill="rgb(58,58,58)"/><circle cx="162" cy="149" r="1.0" fill="rgb(26,26,26)"/><circle cx="1370" cy="268" r="0.9" fill="rgb(33,33,33)"/><circle cx="1664" cy="226" r="1.1" fill="rgb(44,44,44)"/><circle cx="1098" cy="860" r="0.7" fill="rgb(48,48,48)"/><circle cx="94" cy="9" r="0.9" fill="rgb(25,25,25)"/><circle cx="951" cy="860" r="1.0" fill="rgb(23,23,23)"/><circle cx="71" cy="212" r="1.1" fill="rgb(55,55,55)"/><circle cx="799" cy="47" r="1.2" fill="rgb(23,23,23)"/><circle cx="1511" cy="565" r="1.2" fill="rgb(21,21,21)"/><circle cx="528" cy="963" r="1.1" fill="rgb(40,40,40)"/><circle cx="1197" cy="399" r="0.8" fill="rgb(23,23,23)"/><circle cx="235" cy="990" r="1.0" fill="rgb(46,46,46)"/><circle cx="1637" cy="54" r="1.1" fill="rgb(34,34,34)"/><circle cx="1604" cy="397" r="0.7" fill="rgb(49,49,49)"/><circle cx="459" cy="995" r="0.9" fill="rgb(36,36,36)"/><circle cx="1581" cy="433" r="1.0" fill="rgb(44,44,44)"/><circle cx="144" cy="620" r="1.1" fill="rgb(50,50,50)"/><circle cx="138" cy="155" r="1.0" fill="rgb(46,46,46)"/><circle cx="1243" cy="317" r="0.7" fill="rgb(24,24,24)"/><circle cx="453" cy="133" r="0.9" fill="rgb(26,26,26)"/><circle cx="932" cy="409" r="0.9" fill="rgb(20,20,20)"/><circle cx="156" cy="599" r="0.9" fill="rgb(30,30,30)"/><circle cx="142" cy="903" r="1.2" fill="rgb(58,58,58)"/><circle cx="961" cy="170" r="0.8" fill="rgb(32,32,32)"/><circle cx="106" cy="436" r="0.9" fill="rgb(33,33,33)"/><circle cx="129" cy="252" r="1.0" fill="rgb(28,28,28)"/><circle cx="998" cy="196" r="0.9" fill="rgb(24,24,24)"/><circle cx="1594" cy="333" r="1.1" fill="rgb(41,41,41)"/><circle cx="1370" cy="861" r="0.8" fill="rgb(66,66,66)"/><circle cx="539" cy="949" r="0.9" fill="rgb(26,26,26)"/><circle cx="1620" cy="971" r="1.0" fill="rgb(29,29,29)"/><circle cx="1372" cy="394" r="1.0" fill="rgb(24,24,24)"/><circle cx="995" cy="547" r="1.0" fill="rgb(44,44,44)"/><circle cx="1601" cy="463" r="0.9" fill="rgb(45,45,45)"/><circle cx="1376" cy="797" r="0.9" fill="rgb(33,33,33)"/><circle cx="1064" cy="243" r="1.1" fill="rgb(43,43,43)"/><circle cx="1326" cy="74" r="0.9" fill="rgb(69,69,69)"/><circle cx="1546" cy="693" r="1.1" fill="rgb(38,38,38)"/><circle cx="143" cy="770" r="0.9" fill="rgb(43,43,43)"/><circle cx="1087" cy="44" r="1.0" fill="rgb(68,68,68)"/><circle cx="1622" cy="431" r="0.8" fill="rgb(19,19,19)"/><circle cx="975" cy="576" r="0.9" fill="rgb(34,34,34)"/><circle cx="1298" cy="590" r="0.9" fill="rgb(36,36,36)"/><circle cx="41" cy="105" r="1.2" fill="rgb(33,33,33)"/><circle cx="195" cy="943" r="0.9" fill="rgb(25,25,25)"/><circle cx="765" cy="207" r="0.9" fill="rgb(36,36,36)"/><circle cx="1361" cy="115" r="1.0" fill="rgb(54,54,54)"/><circle cx="1138" cy="165" r="0.8" fill="rgb(68,68,68)"/><circle cx="293" cy="160" r="1.2" fill="rgb(39,39,39)"/><circle cx="726" cy="29" r="0.8" fill="rgb(41,41,41)"/><circle cx="995" cy="390" r="0.8" fill="rgb(45,45,45)"/><circle cx="1264" cy="810" r="0.8" fill="rgb(22,22,22)"/><circle cx="1465" cy="187" r="0.9" fill="rgb(30,30,30)"/><circle cx="1003" cy="613" r="0.9" fill="rgb(40,40,40)"/><circle cx="1420" cy="619" r="1.1" fill="rgb(51,51,51)"/><circle cx="142" cy="134" r="0.9" fill="rgb(24,24,24)"/><circle cx="232" cy="384" r="1.0" fill="rgb(26,26,26)"/><circle cx="1165" cy="647" r="1.0" fill="rgb(74,74,74)"/><circle cx="823" cy="141" r="0.9" fill="rgb(30,30,30)"/><circle cx="90" cy="360" r="0.8" fill="rgb(19,19,19)"/><circle cx="1370" cy="966" r="0.9" fill="rgb(37,37,37)"/><circle cx="1150" cy="416" r="0.9" fill="rgb(53,53,53)"/><circle cx="139" cy="31" r="0.8" fill="rgb(48,48,48)"/><circle cx="1247" cy="767" r="0.8" fill="rgb(38,38,38)"/><circle cx="192" cy="777" r="0.9" fill="rgb(52,52,52)"/><circle cx="1382" cy="42" r="1.0" fill="rgb(46,46,46)"/><circle cx="1663" cy="103" r="1.1" fill="rgb(52,52,52)"/><circle cx="500" cy="1001" r="0.9" fill="rgb(35,35,35)"/><circle cx="1372" cy="440" r="1.1" fill="rgb(70,70,70)"/><circle cx="988" cy="351" r="1.0" fill="rgb(46,46,46)"/><circle cx="279" cy="140" r="0.8" fill="rgb(26,26,26)"/><circle cx="100" cy="352" r="1.0" fill="rgb(29,29,29)"/><circle cx="1441" cy="987" r="0.7" fill="rgb(44,44,44)"/><circle cx="1617" cy="787" r="1.2" fill="rgb(59,59,59)"/><circle cx="1457" cy="127" r="0.8" fill="rgb(55,55,55)"/><circle cx="1195" cy="830" r="1.0" fill="rgb(48,48,48)"/><circle cx="1479" cy="93" r="0.8" fill="rgb(37,37,37)"/><circle cx="1573" cy="370" r="0.9" fill="rgb(62,62,62)"/><circle cx="4" cy="776" r="1.1" fill="rgb(47,47,47)"/><circle cx="602" cy="63" r="0.8" fill="rgb(38,38,38)"/><circle cx="722" cy="212" r="1.1" fill="rgb(28,28,28)"/><circle cx="951" cy="486" r="1.0" fill="rgb(31,31,31)"/><circle cx="81" cy="100" r="0.9" fill="rgb(49,49,49)"/><circle cx="209" cy="859" r="0.7" fill="rgb(34,34,34)"/><circle cx="1609" cy="203" r="0.8" fill="rgb(44,44,44)"/><circle cx="1092" cy="159" r="0.8" fill="rgb(61,61,61)"/><circle cx="1100" cy="251" r="1.2" fill="rgb(32,32,32)"/><circle cx="1182" cy="1" r="0.8" fill="rgb(36,36,36)"/><circle cx="16" cy="697" r="1.2" fill="rgb(51,51,51)"/><circle cx="709" cy="132" r="0.9" fill="rgb(22,22,22)"/><circle cx="1228" cy="103" r="1.1" fill="rgb(30,30,30)"/><circle cx="230" cy="775" r="0.8" fill="rgb(48,48,48)"/><circle cx="1668" cy="143" r="0.7" fill="rgb(38,38,38)"/><circle cx="1092" cy="441" r="1.0" fill="rgb(46,46,46)"/><circle cx="1153" cy="862" r="0.8" fill="rgb(23,23,23)"/><circle cx="1264" cy="591" r="1.2" fill="rgb(32,32,32)"/><circle cx="528" cy="140" r="0.7" fill="rgb(29,29,29)"/><circle cx="930" cy="601" r="1.1" fill="rgb(41,41,41)"/><circle cx="1160" cy="850" r="0.9" fill="rgb(43,43,43)"/><circle cx="1256" cy="296" r="1.1" fill="rgb(22,22,22)"/><circle cx="1604" cy="496" r="0.9" fill="rgb(24,24,24)"/><circle cx="998" cy="529" r="1.2" fill="rgb(66,66,66)"/><circle cx="1569" cy="132" r="1.0" fill="rgb(54,54,54)"/><circle cx="1281" cy="956" r="0.7" fill="rgb(49,49,49)"/><circle cx="113" cy="263" r="0.7" fill="rgb(21,21,21)"/><circle cx="1326" cy="508" r="1.0" fill="rgb(42,42,42)"/><circle cx="138" cy="538" r="0.8" fill="rgb(41,41,41)"/><circle cx="901" cy="392" r="1.1" fill="rgb(42,42,42)"/><circle cx="1144" cy="66" r="1.1" fill="rgb(45,45,45)"/><circle cx="1422" cy="58" r="0.9" fill="rgb(23,23,23)"/><circle cx="1244" cy="120" r="1.1" fill="rgb(45,45,45)"/><circle cx="275" cy="955" r="1.1" fill="rgb(37,37,37)"/><circle cx="1211" cy="167" r="1.1" fill="rgb(24,24,24)"/><circle cx="1296" cy="29" r="0.8" fill="rgb(51,51,51)"/><circle cx="107" cy="714" r="0.7" fill="rgb(39,39,39)"/><circle cx="173" cy="575" r="0.8" fill="rgb(46,46,46)"/><circle cx="855" cy="44" r="0.8" fill="rgb(55,55,55)"/><circle cx="252" cy="933" r="1.0" fill="rgb(54,54,54)"/><circle cx="1535" cy="742" r="0.9" fill="rgb(33,33,33)"/><circle cx="456" cy="78" r="1.0" fill="rgb(32,32,32)"/><circle cx="1515" cy="180" r="1.2" fill="rgb(51,51,51)"/><circle cx="1603" cy="69" r="0.8" fill="rgb(35,35,35)"/><circle cx="1419" cy="328" r="0.7" fill="rgb(38,38,38)"/><circle cx="328" cy="902" r="0.8" fill="rgb(48,48,48)"/><circle cx="11" cy="411" r="0.9" fill="rgb(27,27,27)"/><circle cx="1410" cy="879" r="0.7" fill="rgb(63,63,63)"/><circle cx="1104" cy="851" r="0.8" fill="rgb(46,46,46)"/><circle cx="890" cy="239" r="0.7" fill="rgb(36,36,36)"/><circle cx="1675" cy="713" r="1.2" fill="rgb(23,23,23)"/><circle cx="1507" cy="521" r="0.9" fill="rgb(45,45,45)"/><circle cx="1637" cy="85" r="0.8" fill="rgb(23,23,23)"/><circle cx="1378" cy="75" r="0.9" fill="rgb(39,39,39)"/><circle cx="1620" cy="237" r="0.9" fill="rgb(28,28,28)"/><circle cx="1345" cy="702" r="0.9" fill="rgb(47,47,47)"/><circle cx="457" cy="75" r="1.1" fill="rgb(26,26,26)"/><circle cx="982" cy="156" r="0.9" fill="rgb(25,25,25)"/><circle cx="1621" cy="208" r="0.8" fill="rgb(30,30,30)"/><circle cx="201" cy="158" r="1.1" fill="rgb(44,44,44)"/><circle cx="1171" cy="40" r="0.9" fill="rgb(53,53,53)"/><circle cx="153" cy="249" r="1.0" fill="rgb(31,31,31)"/><circle cx="1138" cy="261" r="0.7" fill="rgb(69,69,69)"/><circle cx="1257" cy="250" r="1.1" fill="rgb(35,35,35)"/><circle cx="235" cy="12" r="1.2" fill="rgb(52,52,52)"/><circle cx="220" cy="825" r="1.0" fill="rgb(32,32,32)"/><circle cx="1083" cy="583" r="1.1" fill="rgb(28,28,28)"/><circle cx="37" cy="65" r="0.9" fill="rgb(58,58,58)"/><circle cx="216" cy="907" r="0.9" fill="rgb(52,52,52)"/><circle cx="72" cy="462" r="1.0" fill="rgb(25,25,25)"/><circle cx="1380" cy="396" r="1.0" fill="rgb(21,21,21)"/><circle cx="290" cy="215" r="0.8" fill="rgb(26,26,26)"/><circle cx="1484" cy="35" r="0.8" fill="rgb(41,41,41)"/><circle cx="925" cy="61" r="0.8" fill="rgb(29,29,29)"/><circle cx="335" cy="886" r="1.0" fill="rgb(37,37,37)"/><circle cx="1348" cy="796" r="1.1" fill="rgb(69,69,69)"/><circle cx="814" cy="915" r="0.9" fill="rgb(36,36,36)"/><circle cx="368" cy="898" r="0.7" fill="rgb(49,49,49)"/><circle cx="1666" cy="530" r="1.2" fill="rgb(48,48,48)"/><circle cx="1636" cy="100" r="0.8" fill="rgb(43,43,43)"/><circle cx="1371" cy="919" r="1.2" fill="rgb(22,22,22)"/><circle cx="1340" cy="356" r="1.1" fill="rgb(53,53,53)"/><circle cx="1354" cy="699" r="0.7" fill="rgb(59,59,59)"/><circle cx="1177" cy="949" r="1.0" fill="rgb(39,39,39)"/><circle cx="316" cy="990" r="0.9" fill="rgb(56,56,56)"/><circle cx="152" cy="233" r="1.0" fill="rgb(27,27,27)"/><circle cx="1" cy="920" r="0.8" fill="rgb(26,26,26)"/><circle cx="1204" cy="921" r="0.9" fill="rgb(53,53,53)"/><circle cx="37" cy="588" r="1.1" fill="rgb(59,59,59)"/><circle cx="1422" cy="862" r="0.9" fill="rgb(64,64,64)"/><circle cx="1582" cy="396" r="0.9" fill="rgb(23,23,23)"/><circle cx="229" cy="158" r="1.1" fill="rgb(62,62,62)"/><circle cx="1614" cy="650" r="1.2" fill="rgb(26,26,26)"/><circle cx="1165" cy="931" r="0.8" fill="rgb(50,50,50)"/><circle cx="989" cy="176" r="1.0" fill="rgb(30,30,30)"/><circle cx="214" cy="730" r="1.2" fill="rgb(62,62,62)"/><circle cx="658" cy="996" r="0.7" fill="rgb(64,64,64)"/><circle cx="1012" cy="923" r="0.8" fill="rgb(65,65,65)"/><circle cx="950" cy="939" r="1.1" fill="rgb(25,25,25)"/><circle cx="400" cy="984" r="1.1" fill="rgb(25,25,25)"/><circle cx="149" cy="710" r="1.1" fill="rgb(42,42,42)"/><circle cx="419" cy="68" r="0.8" fill="rgb(28,28,28)"/><circle cx="2" cy="387" r="1.2" fill="rgb(47,47,47)"/><circle cx="1486" cy="494" r="1.0" fill="rgb(32,32,32)"/><circle cx="170" cy="480" r="1.0" fill="rgb(55,55,55)"/><circle cx="1154" cy="163" r="1.1" fill="rgb(23,23,23)"/><circle cx="1599" cy="74" r="0.9" fill="rgb(25,25,25)"/><circle cx="1230" cy="548" r="0.7" fill="rgb(57,57,57)"/><circle cx="998" cy="615" r="0.7" fill="rgb(36,36,36)"/><circle cx="1583" cy="165" r="0.8" fill="rgb(57,57,57)"/><circle cx="170" cy="206" r="1.0" fill="rgb(26,26,26)"/><circle cx="1213" cy="731" r="0.8" fill="rgb(28,28,28)"/><circle cx="399" cy="50" r="1.1" fill="rgb(39,39,39)"/><circle cx="258" cy="362" r="0.8" fill="rgb(34,34,34)"/><circle cx="1112" cy="601" r="0.7" fill="rgb(26,26,26)"/><circle cx="287" cy="292" r="1.1" fill="rgb(23,23,23)"/><circle cx="153" cy="545" r="1.1" fill="rgb(26,26,26)"/><circle cx="104" cy="754" r="0.7" fill="rgb(43,43,43)"/><circle cx="1631" cy="591" r="1.1" fill="rgb(38,38,38)"/><circle cx="1375" cy="419" r="1.1" fill="rgb(38,38,38)"/><circle cx="798" cy="883" r="0.7" fill="rgb(35,35,35)"/><circle cx="1517" cy="716" r="1.2" fill="rgb(36,36,36)"/><circle cx="1345" cy="679" r="0.8" fill="rgb(41,41,41)"/><circle cx="1272" cy="173" r="1.2" fill="rgb(68,68,68)"/><circle cx="1358" cy="126" r="1.2" fill="rgb(34,34,34)"/><circle cx="731" cy="999" r="1.1" fill="rgb(42,42,42)"/><circle cx="433" cy="913" r="0.7" fill="rgb(59,59,59)"/><circle cx="770" cy="875" r="1.0" fill="rgb(50,50,50)"/><circle cx="696" cy="148" r="1.1" fill="rgb(40,40,40)"/><circle cx="1579" cy="927" r="0.8" fill="rgb(39,39,39)"/><circle cx="1023" cy="38" r="0.8" fill="rgb(29,29,29)"/><circle cx="1023" cy="695" r="1.1" fill="rgb(21,21,21)"/><circle cx="1253" cy="923" r="0.7" fill="rgb(57,57,57)"/><circle cx="1373" cy="304" r="0.9" fill="rgb(29,29,29)"/><circle cx="1170" cy="98" r="0.8" fill="rgb(55,55,55)"/><circle cx="1637" cy="444" r="0.8" fill="rgb(52,52,52)"/><circle cx="316" cy="212" r="1.1" fill="rgb(52,52,52)"/><circle cx="1276" cy="869" r="1.0" fill="rgb(52,52,52)"/><circle cx="267" cy="312" r="0.8" fill="rgb(37,37,37)"/><circle cx="1430" cy="881" r="0.8" fill="rgb(21,21,21)"/><circle cx="1399" cy="839" r="0.9" fill="rgb(28,28,28)"/><circle cx="1542" cy="706" r="1.1" fill="rgb(29,29,29)"/><circle cx="208" cy="31" r="1.0" fill="rgb(32,32,32)"/><circle cx="298" cy="872" r="0.9" fill="rgb(40,40,40)"/><circle cx="275" cy="896" r="1.0" fill="rgb(47,47,47)"/><circle cx="1621" cy="859" r="1.0" fill="rgb(42,42,42)"/><circle cx="34" cy="782" r="0.7" fill="rgb(49,49,49)"/><circle cx="1531" cy="649" r="0.7" fill="rgb(40,40,40)"/><circle cx="513" cy="969" r="0.9" fill="rgb(42,42,42)"/><circle cx="1138" cy="826" r="0.8" fill="rgb(33,33,33)"/><circle cx="1417" cy="375" r="1.0" fill="rgb(42,42,42)"/><circle cx="501" cy="108" r="1.2" fill="rgb(22,22,22)"/><circle cx="1076" cy="863" r="1.1" fill="rgb(28,28,28)"/><circle cx="1499" cy="299" r="1.1" fill="rgb(25,25,25)"/><circle cx="1511" cy="807" r="1.0" fill="rgb(51,51,51)"/><circle cx="1110" cy="682" r="1.0" fill="rgb(46,46,46)"/><circle cx="1676" cy="260" r="0.9" fill="rgb(33,33,33)"/><circle cx="59" cy="709" r="0.8" fill="rgb(39,39,39)"/><circle cx="1221" cy="223" r="1.1" fill="rgb(38,38,38)"/><circle cx="1523" cy="673" r="1.1" fill="rgb(37,37,37)"/><circle cx="1412" cy="878" r="0.7" fill="rgb(26,26,26)"/><circle cx="215" cy="259" r="1.1" fill="rgb(51,51,51)"/><circle cx="564" cy="89" r="1.1" fill="rgb(31,31,31)"/><circle cx="791" cy="868" r="1.2" fill="rgb(40,40,40)"/><circle cx="120" cy="891" r="1.1" fill="rgb(36,36,36)"/><circle cx="91" cy="856" r="0.8" fill="rgb(24,24,24)"/><circle cx="1523" cy="458" r="1.1" fill="rgb(30,30,30)"/><circle cx="1309" cy="489" r="0.8" fill="rgb(42,42,42)"/><circle cx="1066" cy="5" r="1.1" fill="rgb(29,29,29)"/><circle cx="148" cy="616" r="0.9" fill="rgb(42,42,42)"/><circle cx="1622" cy="384" r="0.8" fill="rgb(21,21,21)"/><circle cx="627" cy="14" r="1.1" fill="rgb(30,30,30)"/><circle cx="1053" cy="249" r="0.9" fill="rgb(45,45,45)"/><circle cx="217" cy="384" r="0.8" fill="rgb(40,40,40)"/><circle cx="1384" cy="299" r="1.1" fill="rgb(29,29,29)"/><circle cx="1002" cy="339" r="1.2" fill="rgb(56,56,56)"/><circle cx="604" cy="189" r="1.2" fill="rgb(62,62,62)"/><circle cx="1222" cy="131" r="1.0" fill="rgb(47,47,47)"/><circle cx="1093" cy="37" r="0.8" fill="rgb(56,56,56)"/><circle cx="898" cy="49" r="1.0" fill="rgb(71,71,71)"/><circle cx="1098" cy="20" r="0.9" fill="rgb(44,44,44)"/><circle cx="797" cy="153" r="1.0" fill="rgb(45,45,45)"/><circle cx="1113" cy="271" r="0.8" fill="rgb(41,41,41)"/><circle cx="1395" cy="105" r="0.8" fill="rgb(46,46,46)"/><circle cx="192" cy="106" r="0.8" fill="rgb(26,26,26)"/><circle cx="496" cy="39" r="0.8" fill="rgb(36,36,36)"/><circle cx="1568" cy="331" r="1.0" fill="rgb(18,18,18)"/><circle cx="1524" cy="837" r="0.8" fill="rgb(43,43,43)"/><circle cx="151" cy="513" r="0.8" fill="rgb(46,46,46)"/><circle cx="1661" cy="297" r="0.7" fill="rgb(35,35,35)"/><circle cx="293" cy="40" r="1.1" fill="rgb(29,29,29)"/><circle cx="160" cy="760" r="1.1" fill="rgb(21,21,21)"/><circle cx="1114" cy="171" r="0.9" fill="rgb(31,31,31)"/><circle cx="1045" cy="880" r="1.1" fill="rgb(23,23,23)"/><circle cx="1617" cy="272" r="1.1" fill="rgb(32,32,32)"/><circle cx="1344" cy="650" r="0.8" fill="rgb(50,50,50)"/><circle cx="1170" cy="59" r="0.8" fill="rgb(62,62,62)"/><circle cx="1348" cy="680" r="0.9" fill="rgb(26,26,26)"/><circle cx="602" cy="29" r="1.1" fill="rgb(44,44,44)"/><circle cx="1635" cy="131" r="0.8" fill="rgb(59,59,59)"/><circle cx="691" cy="46" r="0.9" fill="rgb(28,28,28)"/><circle cx="1184" cy="679" r="1.0" fill="rgb(49,49,49)"/><circle cx="949" cy="980" r="0.9" fill="rgb(44,44,44)"/><circle cx="160" cy="663" r="0.9" fill="rgb(28,28,28)"/><circle cx="1136" cy="386" r="1.0" fill="rgb(53,53,53)"/><circle cx="1659" cy="55" r="0.8" fill="rgb(42,42,42)"/><circle cx="1426" cy="854" r="0.7" fill="rgb(55,55,55)"/><circle cx="826" cy="241" r="0.7" fill="rgb(65,65,65)"/><circle cx="751" cy="119" r="1.0" fill="rgb(36,36,36)"/><circle cx="172" cy="413" r="0.7" fill="rgb(39,39,39)"/><circle cx="153" cy="605" r="0.9" fill="rgb(41,41,41)"/><circle cx="854" cy="207" r="1.2" fill="rgb(44,44,44)"/><circle cx="610" cy="54" r="0.9" fill="rgb(27,27,27)"/><circle cx="941" cy="621" r="1.0" fill="rgb(35,35,35)"/><circle cx="1203" cy="114" r="0.8" fill="rgb(48,48,48)"/><circle cx="1620" cy="293" r="1.1" fill="rgb(37,37,37)"/><circle cx="77" cy="164" r="1.1" fill="rgb(25,25,25)"/><circle cx="1212" cy="107" r="0.8" fill="rgb(41,41,41)"/><circle cx="1563" cy="394" r="1.1" fill="rgb(35,35,35)"/><circle cx="1204" cy="108" r="1.2" fill="rgb(33,33,33)"/><circle cx="1407" cy="590" r="0.9" fill="rgb(49,49,49)"/><circle cx="1106" cy="958" r="0.9" fill="rgb(24,24,24)"/><circle cx="891" cy="49" r="1.1" fill="rgb(61,61,61)"/><circle cx="1548" cy="178" r="1.1" fill="rgb(39,39,39)"/><circle cx="216" cy="388" r="1.1" fill="rgb(40,40,40)"/><circle cx="1646" cy="918" r="0.8" fill="rgb(48,48,48)"/><circle cx="1619" cy="972" r="0.8" fill="rgb(35,35,35)"/><circle cx="1257" cy="300" r="1.1" fill="rgb(45,45,45)"/><circle cx="1196" cy="937" r="0.8" fill="rgb(42,42,42)"/><circle cx="1049" cy="291" r="1.0" fill="rgb(31,31,31)"/><circle cx="1649" cy="651" r="1.0" fill="rgb(63,63,63)"/><circle cx="1166" cy="323" r="0.9" fill="rgb(24,24,24)"/><circle cx="1121" cy="418" r="1.1" fill="rgb(47,47,47)"/><circle cx="1358" cy="524" r="0.8" fill="rgb(20,20,20)"/><circle cx="1126" cy="200" r="0.8" fill="rgb(48,48,48)"/><circle cx="1410" cy="692" r="1.1" fill="rgb(29,29,29)"/><circle cx="54" cy="816" r="1.1" fill="rgb(23,23,23)"/><circle cx="1242" cy="867" r="1.0" fill="rgb(47,47,47)"/><circle cx="1342" cy="288" r="1.2" fill="rgb(43,43,43)"/><circle cx="651" cy="959" r="0.9" fill="rgb(66,66,66)"/><circle cx="928" cy="13" r="1.0" fill="rgb(28,28,28)"/><circle cx="1312" cy="872" r="1.2" fill="rgb(52,52,52)"/><circle cx="1184" cy="649" r="1.0" fill="rgb(48,48,48)"/><circle cx="1014" cy="778" r="0.8" fill="rgb(64,64,64)"/><circle cx="314" cy="174" r="0.9" fill="rgb(37,37,37)"/><circle cx="1192" cy="155" r="0.9" fill="rgb(25,25,25)"/><circle cx="85" cy="934" r="1.0" fill="rgb(41,41,41)"/><circle cx="309" cy="68" r="0.9" fill="rgb(37,37,37)"/><circle cx="902" cy="92" r="0.8" fill="rgb(27,27,27)"/><circle cx="891" cy="999" r="1.2" fill="rgb(52,52,52)"/><circle cx="15" cy="670" r="1.2" fill="rgb(34,34,34)"/><circle cx="1031" cy="622" r="1.0" fill="rgb(64,64,64)"/><circle cx="1588" cy="387" r="0.8" fill="rgb(38,38,38)"/><circle cx="1531" cy="824" r="1.1" fill="rgb(32,32,32)"/><circle cx="749" cy="44" r="0.8" fill="rgb(57,57,57)"/><circle cx="863" cy="950" r="1.2" fill="rgb(25,25,25)"/><circle cx="904" cy="7" r="1.0" fill="rgb(22,22,22)"/><circle cx="1300" cy="867" r="0.8" fill="rgb(34,34,34)"/><circle cx="903" cy="704" r="1.1" fill="rgb(66,66,66)"/><circle cx="1086" cy="942" r="0.8" fill="rgb(47,47,47)"/><circle cx="147" cy="54" r="1.0" fill="rgb(50,50,50)"/><circle cx="966" cy="228" r="0.9" fill="rgb(28,28,28)"/><circle cx="1059" cy="434" r="1.0" fill="rgb(20,20,20)"/><circle cx="1039" cy="757" r="1.1" fill="rgb(40,40,40)"/><circle cx="122" cy="930" r="1.1" fill="rgb(24,24,24)"/><circle cx="506" cy="87" r="0.9" fill="rgb(48,48,48)"/><circle cx="229" cy="392" r="1.0" fill="rgb(50,50,50)"/><circle cx="1613" cy="144" r="1.2" fill="rgb(44,44,44)"/><circle cx="1336" cy="731" r="1.2" fill="rgb(32,32,32)"/><circle cx="930" cy="556" r="0.7" fill="rgb(24,24,24)"/><circle cx="1002" cy="538" r="0.9" fill="rgb(62,62,62)"/><circle cx="1257" cy="905" r="0.9" fill="rgb(31,31,31)"/><circle cx="1085" cy="514" r="0.8" fill="rgb(25,25,25)"/><circle cx="1402" cy="195" r="1.1" fill="rgb(26,26,26)"/><circle cx="1432" cy="853" r="1.2" fill="rgb(60,60,60)"/><circle cx="488" cy="67" r="1.1" fill="rgb(23,23,23)"/><circle cx="168" cy="621" r="0.9" fill="rgb(57,57,57)"/><circle cx="950" cy="365" r="0.9" fill="rgb(30,30,30)"/><circle cx="8" cy="247" r="1.1" fill="rgb(27,27,27)"/><circle cx="226" cy="734" r="0.9" fill="rgb(56,56,56)"/><circle cx="927" cy="176" r="1.1" fill="rgb(41,41,41)"/><circle cx="1443" cy="140" r="0.8" fill="rgb(38,38,38)"/><circle cx="1489" cy="77" r="0.7" fill="rgb(23,23,23)"/><circle cx="852" cy="31" r="0.9" fill="rgb(40,40,40)"/><circle cx="991" cy="908" r="1.0" fill="rgb(38,38,38)"/><circle cx="1678" cy="473" r="0.9" fill="rgb(49,49,49)"/><circle cx="1232" cy="292" r="1.0" fill="rgb(35,35,35)"/><circle cx="1113" cy="850" r="1.0" fill="rgb(51,51,51)"/><circle cx="750" cy="180" r="1.0" fill="rgb(62,62,62)"/><circle cx="1626" cy="737" r="0.9" fill="rgb(36,36,36)"/><circle cx="106" cy="370" r="0.8" fill="rgb(21,21,21)"/><circle cx="1525" cy="362" r="0.9" fill="rgb(35,35,35)"/><circle cx="78" cy="983" r="1.1" fill="rgb(30,30,30)"/><circle cx="876" cy="831" r="0.8" fill="rgb(53,53,53)"/><circle cx="915" cy="174" r="0.9" fill="rgb(43,43,43)"/><circle cx="1098" cy="837" r="0.9" fill="rgb(37,37,37)"/><circle cx="1524" cy="517" r="1.1" fill="rgb(31,31,31)"/><circle cx="1015" cy="503" r="0.8" fill="rgb(24,24,24)"/><circle cx="130" cy="645" r="0.8" fill="rgb(27,27,27)"/><circle cx="199" cy="231" r="1.1" fill="rgb(51,51,51)"/><circle cx="354" cy="162" r="0.7" fill="rgb(52,52,52)"/><circle cx="72" cy="575" r="1.0" fill="rgb(25,25,25)"/><circle cx="66" cy="573" r="0.8" fill="rgb(22,22,22)"/><circle cx="302" cy="960" r="1.0" fill="rgb(40,40,40)"/><circle cx="31" cy="721" r="0.8" fill="rgb(43,43,43)"/><circle cx="144" cy="450" r="1.1" fill="rgb(70,70,70)"/><circle cx="287" cy="832" r="1.1" fill="rgb(40,40,40)"/><circle cx="1378" cy="182" r="0.8" fill="rgb(43,43,43)"/><circle cx="1217" cy="343" r="1.0" fill="rgb(35,35,35)"/><circle cx="182" cy="203" r="1.0" fill="rgb(54,54,54)"/><circle cx="705" cy="150" r="0.9" fill="rgb(23,23,23)"/><circle cx="1033" cy="39" r="1.0" fill="rgb(49,49,49)"/><circle cx="197" cy="483" r="1.0" fill="rgb(24,24,24)"/><circle cx="1390" cy="899" r="1.0" fill="rgb(49,49,49)"/><circle cx="877" cy="371" r="1.0" fill="rgb(21,21,21)"/><circle cx="1326" cy="382" r="1.1" fill="rgb(40,40,40)"/><circle cx="1279" cy="698" r="0.8" fill="rgb(23,23,23)"/><circle cx="802" cy="233" r="0.8" fill="rgb(54,54,54)"/><circle cx="1473" cy="409" r="1.1" fill="rgb(26,26,26)"/><circle cx="1326" cy="579" r="0.7" fill="rgb(24,24,24)"/><circle cx="1100" cy="689" r="0.9" fill="rgb(30,30,30)"/><circle cx="1268" cy="414" r="0.9" fill="rgb(49,49,49)"/><circle cx="1236" cy="857" r="1.1" fill="rgb(43,43,43)"/><circle cx="272" cy="215" r="0.9" fill="rgb(33,33,33)"/><circle cx="925" cy="698" r="0.8" fill="rgb(45,45,45)"/><circle cx="1620" cy="5" r="0.8" fill="rgb(23,23,23)"/><circle cx="1555" cy="436" r="0.8" fill="rgb(22,22,22)"/><circle cx="134" cy="38" r="1.2" fill="rgb(32,32,32)"/><circle cx="1031" cy="522" r="1.0" fill="rgb(46,46,46)"/><circle cx="1589" cy="822" r="0.9" fill="rgb(42,42,42)"/><circle cx="1351" cy="287" r="1.0" fill="rgb(21,21,21)"/><circle cx="867" cy="232" r="0.7" fill="rgb(25,25,25)"/><circle cx="402" cy="0" r="1.2" fill="rgb(25,25,25)"/><circle cx="1310" cy="354" r="1.0" fill="rgb(33,33,33)"/><circle cx="115" cy="90" r="1.1" fill="rgb(29,29,29)"/><circle cx="1537" cy="349" r="0.8" fill="rgb(64,64,64)"/><circle cx="1019" cy="195" r="1.0" fill="rgb(60,60,60)"/><circle cx="179" cy="73" r="1.2" fill="rgb(29,29,29)"/><circle cx="1349" cy="959" r="1.1" fill="rgb(56,56,56)"/><circle cx="966" cy="696" r="1.0" fill="rgb(65,65,65)"/><circle cx="1294" cy="759" r="0.9" fill="rgb(64,64,64)"/><circle cx="46" cy="117" r="1.0" fill="rgb(22,22,22)"/><circle cx="1670" cy="678" r="0.9" fill="rgb(27,27,27)"/><circle cx="1605" cy="518" r="1.1" fill="rgb(19,19,19)"/><circle cx="417" cy="93" r="1.1" fill="rgb(44,44,44)"/><circle cx="128" cy="933" r="0.9" fill="rgb(35,35,35)"/><circle cx="1502" cy="270" r="1.0" fill="rgb(62,62,62)"/><circle cx="1529" cy="500" r="1.1" fill="rgb(26,26,26)"/><circle cx="1466" cy="207" r="0.8" fill="rgb(26,26,26)"/><circle cx="1039" cy="156" r="1.2" fill="rgb(24,24,24)"/><circle cx="1135" cy="665" r="1.1" fill="rgb(41,41,41)"/><circle cx="910" cy="42" r="1.0" fill="rgb(36,36,36)"/><circle cx="827" cy="987" r="1.1" fill="rgb(57,57,57)"/><circle cx="825" cy="986" r="0.8" fill="rgb(59,59,59)"/><circle cx="91" cy="801" r="1.0" fill="rgb(36,36,36)"/><circle cx="1153" cy="175" r="1.0" fill="rgb(66,66,66)"/><circle cx="20" cy="211" r="0.9" fill="rgb(40,40,40)"/><circle cx="1029" cy="260" r="0.8" fill="rgb(38,38,38)"/><circle cx="470" cy="180" r="1.0" fill="rgb(24,24,24)"/><circle cx="384" cy="100" r="0.8" fill="rgb(28,28,28)"/><circle cx="245" cy="961" r="1.1" fill="rgb(25,25,25)"/><circle cx="1673" cy="851" r="1.1" fill="rgb(37,37,37)"/><circle cx="1319" cy="301" r="1.0" fill="rgb(39,39,39)"/><circle cx="101" cy="815" r="1.0" fill="rgb(35,35,35)"/><circle cx="1565" cy="258" r="0.8" fill="rgb(20,20,20)"/><circle cx="1457" cy="965" r="1.0" fill="rgb(26,26,26)"/><circle cx="1091" cy="175" r="0.9" fill="rgb(49,49,49)"/><circle cx="1131" cy="488" r="1.1" fill="rgb(47,47,47)"/><circle cx="1061" cy="145" r="1.1" fill="rgb(25,25,25)"/><circle cx="960" cy="851" r="0.8" fill="rgb(22,22,22)"/><circle cx="1083" cy="272" r="1.1" fill="rgb(34,34,34)"/><circle cx="1622" cy="415" r="0.7" fill="rgb(26,26,26)"/><circle cx="1223" cy="663" r="1.1" fill="rgb(61,61,61)"/><circle cx="135" cy="167" r="0.7" fill="rgb(23,23,23)"/><circle cx="1476" cy="550" r="0.9" fill="rgb(21,21,21)"/><circle cx="1285" cy="83" r="0.8" fill="rgb(28,28,28)"/><circle cx="1100" cy="887" r="0.8" fill="rgb(30,30,30)"/><circle cx="221" cy="840" r="1.0" fill="rgb(21,21,21)"/><circle cx="1445" cy="326" r="1.2" fill="rgb(35,35,35)"/><circle cx="908" cy="273" r="1.2" fill="rgb(34,34,34)"/><circle cx="1172" cy="177" r="1.0" fill="rgb(40,40,40)"/><circle cx="1068" cy="565" r="1.0" fill="rgb(37,37,37)"/><circle cx="907" cy="806" r="0.9" fill="rgb(34,34,34)"/><circle cx="0" cy="817" r="0.9" fill="rgb(53,53,53)"/><circle cx="788" cy="8" r="1.2" fill="rgb(59,59,59)"/><circle cx="801" cy="9" r="0.8" fill="rgb(34,34,34)"/><circle cx="388" cy="7" r="0.9" fill="rgb(32,32,32)"/><circle cx="942" cy="396" r="1.1" fill="rgb(25,25,25)"/><circle cx="1529" cy="809" r="0.8" fill="rgb(44,44,44)"/><circle cx="1248" cy="810" r="1.1" fill="rgb(33,33,33)"/><circle cx="306" cy="290" r="1.0" fill="rgb(42,42,42)"/><circle cx="315" cy="19" r="1.0" fill="rgb(22,22,22)"/><circle cx="312" cy="102" r="1.1" fill="rgb(28,28,28)"/><circle cx="1222" cy="233" r="0.9" fill="rgb(25,25,25)"/><circle cx="1343" cy="1000" r="1.1" fill="rgb(35,35,35)"/><circle cx="1599" cy="56" r="0.7" fill="rgb(49,49,49)"/><circle cx="790" cy="193" r="1.1" fill="rgb(53,53,53)"/><circle cx="1391" cy="122" r="0.8" fill="rgb(49,49,49)"/><circle cx="1296" cy="444" r="0.7" fill="rgb(47,47,47)"/><circle cx="876" cy="984" r="1.0" fill="rgb(35,35,35)"/><circle cx="1057" cy="42" r="1.0" fill="rgb(61,61,61)"/><circle cx="334" cy="889" r="0.8" fill="rgb(55,55,55)"/><circle cx="190" cy="634" r="0.8" fill="rgb(30,30,30)"/><circle cx="464" cy="120" r="0.7" fill="rgb(50,50,50)"/><circle cx="71" cy="785" r="1.0" fill="rgb(35,35,35)"/><circle cx="624" cy="90" r="0.7" fill="rgb(25,25,25)"/><circle cx="1039" cy="933" r="1.0" fill="rgb(72,72,72)"/><circle cx="100" cy="646" r="1.1" fill="rgb(45,45,45)"/><circle cx="211" cy="233" r="1.1" fill="rgb(67,67,67)"/><circle cx="1271" cy="807" r="0.8" fill="rgb(34,34,34)"/><circle cx="1158" cy="359" r="1.1" fill="rgb(24,24,24)"/><circle cx="319" cy="187" r="1.1" fill="rgb(31,31,31)"/><circle cx="1536" cy="556" r="0.8" fill="rgb(22,22,22)"/><circle cx="617" cy="1" r="0.9" fill="rgb(42,42,42)"/><circle cx="312" cy="19" r="1.1" fill="rgb(54,54,54)"/><circle cx="1106" cy="540" r="1.0" fill="rgb(32,32,32)"/><circle cx="1030" cy="323" r="0.8" fill="rgb(42,42,42)"/><circle cx="879" cy="67" r="0.8" fill="rgb(53,53,53)"/><circle cx="1467" cy="202" r="0.7" fill="rgb(36,36,36)"/><circle cx="959" cy="838" r="1.0" fill="rgb(43,43,43)"/><circle cx="1178" cy="256" r="1.0" fill="rgb(32,32,32)"/><circle cx="119" cy="932" r="0.9" fill="rgb(27,27,27)"/><circle cx="1495" cy="80" r="0.7" fill="rgb(50,50,50)"/><circle cx="937" cy="940" r="0.9" fill="rgb(33,33,33)"/><circle cx="1190" cy="825" r="0.7" fill="rgb(28,28,28)"/><circle cx="118" cy="305" r="1.2" fill="rgb(62,62,62)"/><circle cx="163" cy="727" r="0.8" fill="rgb(38,38,38)"/><circle cx="884" cy="249" r="0.8" fill="rgb(41,41,41)"/><circle cx="1259" cy="416" r="1.0" fill="rgb(24,24,24)"/><circle cx="1118" cy="885" r="0.8" fill="rgb(25,25,25)"/><circle cx="266" cy="1000" r="0.9" fill="rgb(34,34,34)"/><circle cx="529" cy="993" r="0.9" fill="rgb(30,30,30)"/><circle cx="1284" cy="431" r="1.0" fill="rgb(46,46,46)"/><circle cx="946" cy="214" r="1.2" fill="rgb(48,48,48)"/><circle cx="427" cy="964" r="0.9" fill="rgb(34,34,34)"/><circle cx="1220" cy="985" r="1.0" fill="rgb(40,40,40)"/><circle cx="1669" cy="302" r="0.8" fill="rgb(29,29,29)"/><circle cx="1438" cy="22" r="1.0" fill="rgb(52,52,52)"/><circle cx="935" cy="928" r="0.7" fill="rgb(25,25,25)"/><circle cx="598" cy="139" r="1.0" fill="rgb(32,32,32)"/><circle cx="154" cy="401" r="1.1" fill="rgb(59,59,59)"/><circle cx="1216" cy="794" r="1.1" fill="rgb(25,25,25)"/><circle cx="1159" cy="577" r="1.0" fill="rgb(58,58,58)"/><circle cx="968" cy="79" r="1.1" fill="rgb(22,22,22)"/><circle cx="1461" cy="227" r="1.0" fill="rgb(43,43,43)"/><circle cx="19" cy="779" r="0.9" fill="rgb(32,32,32)"/><circle cx="69" cy="541" r="1.0" fill="rgb(25,25,25)"/><circle cx="371" cy="51" r="0.9" fill="rgb(47,47,47)"/><circle cx="848" cy="223" r="0.9" fill="rgb(29,29,29)"/><circle cx="222" cy="83" r="0.7" fill="rgb(39,39,39)"/><circle cx="671" cy="85" r="1.1" fill="rgb(36,36,36)"/><circle cx="219" cy="135" r="0.9" fill="rgb(39,39,39)"/><circle cx="1096" cy="196" r="1.1" fill="rgb(41,41,41)"/><circle cx="414" cy="72" r="0.9" fill="rgb(49,49,49)"/><circle cx="1553" cy="90" r="0.9" fill="rgb(44,44,44)"/><circle cx="998" cy="24" r="1.2" fill="rgb(30,30,30)"/><circle cx="1035" cy="992" r="0.8" fill="rgb(34,34,34)"/><circle cx="75" cy="820" r="0.9" fill="rgb(26,26,26)"/><circle cx="1273" cy="854" r="0.7" fill="rgb(24,24,24)"/><circle cx="1594" cy="929" r="1.1" fill="rgb(55,55,55)"/><circle cx="23" cy="695" r="0.9" fill="rgb(24,24,24)"/><circle cx="38" cy="209" r="0.8" fill="rgb(38,38,38)"/><circle cx="879" cy="259" r="1.1" fill="rgb(36,36,36)"/><circle cx="31" cy="584" r="0.7" fill="rgb(43,43,43)"/><circle cx="286" cy="285" r="1.0" fill="rgb(50,50,50)"/><circle cx="89" cy="656" r="0.9" fill="rgb(19,19,19)"/><circle cx="1109" cy="866" r="1.1" fill="rgb(20,20,20)"/><circle cx="1091" cy="232" r="1.2" fill="rgb(32,32,32)"/><circle cx="167" cy="316" r="1.0" fill="rgb(55,55,55)"/><circle cx="769" cy="928" r="0.8" fill="rgb(20,20,20)"/><circle cx="889" cy="334" r="0.8" fill="rgb(33,33,33)"/><circle cx="1050" cy="237" r="1.0" fill="rgb(67,67,67)"/><circle cx="1364" cy="627" r="1.1" fill="rgb(56,56,56)"/><circle cx="1369" cy="30" r="0.8" fill="rgb(39,39,39)"/><circle cx="255" cy="899" r="0.7" fill="rgb(43,43,43)"/><circle cx="642" cy="963" r="1.0" fill="rgb(41,41,41)"/><circle cx="382" cy="241" r="1.2" fill="rgb(25,25,25)"/><circle cx="1528" cy="330" r="0.8" fill="rgb(38,38,38)"/><circle cx="1344" cy="864" r="1.1" fill="rgb(30,30,30)"/><circle cx="880" cy="136" r="1.2" fill="rgb(71,71,71)"/><circle cx="244" cy="935" r="0.9" fill="rgb(59,59,59)"/><circle cx="936" cy="950" r="0.9" fill="rgb(24,24,24)"/><circle cx="1478" cy="729" r="1.1" fill="rgb(48,48,48)"/><circle cx="744" cy="936" r="1.2" fill="rgb(57,57,57)"/><circle cx="179" cy="185" r="1.0" fill="rgb(48,48,48)"/><circle cx="388" cy="233" r="0.9" fill="rgb(44,44,44)"/><circle cx="1156" cy="478" r="1.0" fill="rgb(36,36,36)"/><circle cx="1196" cy="375" r="0.9" fill="rgb(54,54,54)"/><circle cx="231" cy="194" r="1.1" fill="rgb(21,21,21)"/><circle cx="25" cy="270" r="1.1" fill="rgb(33,33,33)"/><circle cx="1660" cy="759" r="1.2" fill="rgb(22,22,22)"/><circle cx="1656" cy="869" r="0.9" fill="rgb(36,36,36)"/><circle cx="769" cy="247" r="0.7" fill="rgb(33,33,33)"/><circle cx="1235" cy="381" r="1.0" fill="rgb(30,30,30)"/><circle cx="1247" cy="595" r="1.1" fill="rgb(37,37,37)"/><circle cx="1322" cy="522" r="1.1" fill="rgb(35,35,35)"/><circle cx="71" cy="998" r="0.9" fill="rgb(37,37,37)"/><circle cx="1235" cy="559" r="1.0" fill="rgb(37,37,37)"/><circle cx="83" cy="292" r="0.9" fill="rgb(33,33,33)"/><circle cx="1390" cy="462" r="1.0" fill="rgb(34,34,34)"/><circle cx="92" cy="518" r="1.1" fill="rgb(25,25,25)"/><circle cx="190" cy="780" r="1.0" fill="rgb(61,61,61)"/><circle cx="227" cy="414" r="0.8" fill="rgb(35,35,35)"/><circle cx="992" cy="714" r="0.9" fill="rgb(26,26,26)"/><circle cx="1524" cy="798" r="0.8" fill="rgb(46,46,46)"/><circle cx="192" cy="450" r="1.0" fill="rgb(31,31,31)"/><circle cx="860" cy="952" r="0.9" fill="rgb(32,32,32)"/><circle cx="1291" cy="914" r="1.0" fill="rgb(39,39,39)"/><circle cx="252" cy="871" r="1.1" fill="rgb(26,26,26)"/><circle cx="1291" cy="447" r="0.8" fill="rgb(42,42,42)"/><circle cx="221" cy="203" r="0.8" fill="rgb(41,41,41)"/><circle cx="771" cy="857" r="0.7" fill="rgb(38,38,38)"/><circle cx="1483" cy="238" r="0.9" fill="rgb(40,40,40)"/><circle cx="689" cy="80" r="0.8" fill="rgb(40,40,40)"/><circle cx="920" cy="621" r="1.1" fill="rgb(39,39,39)"/><circle cx="82" cy="149" r="0.7" fill="rgb(43,43,43)"/><circle cx="1434" cy="668" r="0.8" fill="rgb(53,53,53)"/><circle cx="1546" cy="49" r="0.8" fill="rgb(33,33,33)"/><circle cx="1129" cy="612" r="1.0" fill="rgb(45,45,45)"/><circle cx="1323" cy="178" r="1.0" fill="rgb(35,35,35)"/><circle cx="1565" cy="93" r="0.9" fill="rgb(29,29,29)"/><circle cx="637" cy="68" r="1.0" fill="rgb(34,34,34)"/><circle cx="492" cy="135" r="0.8" fill="rgb(45,45,45)"/><circle cx="1169" cy="613" r="1.1" fill="rgb(24,24,24)"/><circle cx="1057" cy="989" r="1.0" fill="rgb(36,36,36)"/><circle cx="1569" cy="988" r="1.0" fill="rgb(29,29,29)"/><circle cx="1672" cy="355" r="1.0" fill="rgb(24,24,24)"/><circle cx="827" cy="180" r="1.1" fill="rgb(41,41,41)"/><circle cx="1645" cy="2" r="1.0" fill="rgb(20,20,20)"/><circle cx="198" cy="850" r="1.2" fill="rgb(50,50,50)"/><circle cx="941" cy="639" r="0.8" fill="rgb(19,19,19)"/><circle cx="544" cy="6" r="0.9" fill="rgb(44,44,44)"/><circle cx="1217" cy="617" r="0.8" fill="rgb(21,21,21)"/><circle cx="1130" cy="918" r="1.0" fill="rgb(50,50,50)"/><circle cx="1499" cy="538" r="1.1" fill="rgb(31,31,31)"/><circle cx="1403" cy="300" r="0.9" fill="rgb(46,46,46)"/><circle cx="900" cy="209" r="1.1" fill="rgb(44,44,44)"/><circle cx="1492" cy="354" r="0.8" fill="rgb(65,65,65)"/><circle cx="52" cy="986" r="1.1" fill="rgb(42,42,42)"/><circle cx="959" cy="390" r="1.1" fill="rgb(40,40,40)"/><circle cx="1263" cy="707" r="0.7" fill="rgb(30,30,30)"/><circle cx="1597" cy="217" r="0.8" fill="rgb(29,29,29)"/><circle cx="1319" cy="779" r="0.9" fill="rgb(59,59,59)"/><circle cx="42" cy="484" r="0.8" fill="rgb(36,36,36)"/><circle cx="1552" cy="734" r="1.1" fill="rgb(37,37,37)"/><circle cx="241" cy="874" r="1.2" fill="rgb(52,52,52)"/><circle cx="1137" cy="133" r="0.9" fill="rgb(46,46,46)"/><circle cx="1199" cy="523" r="1.2" fill="rgb(19,19,19)"/><circle cx="1154" cy="595" r="0.9" fill="rgb(23,23,23)"/><circle cx="78" cy="522" r="0.9" fill="rgb(43,43,43)"/><circle cx="970" cy="313" r="0.9" fill="rgb(57,57,57)"/><circle cx="323" cy="277" r="0.9" fill="rgb(30,30,30)"/><circle cx="198" cy="150" r="0.7" fill="rgb(29,29,29)"/><circle cx="1047" cy="515" r="0.9" fill="rgb(26,26,26)"/><circle cx="535" cy="142" r="0.8" fill="rgb(45,45,45)"/><circle cx="411" cy="71" r="0.9" fill="rgb(41,41,41)"/><circle cx="745" cy="130" r="1.0" fill="rgb(35,35,35)"/><circle cx="178" cy="54" r="0.8" fill="rgb(34,34,34)"/><circle cx="1001" cy="594" r="1.0" fill="rgb(53,53,53)"/><circle cx="1035" cy="313" r="1.1" fill="rgb(51,51,51)"/><circle cx="1127" cy="535" r="1.1" fill="rgb(66,66,66)"/><circle cx="782" cy="132" r="1.2" fill="rgb(51,51,51)"/><circle cx="1150" cy="712" r="0.8" fill="rgb(35,35,35)"/><circle cx="1036" cy="915" r="1.0" fill="rgb(32,32,32)"/><circle cx="1118" cy="790" r="0.9" fill="rgb(56,56,56)"/><circle cx="51" cy="476" r="0.9" fill="rgb(31,31,31)"/><circle cx="1015" cy="128" r="1.1" fill="rgb(23,23,23)"/><circle cx="1339" cy="327" r="1.1" fill="rgb(43,43,43)"/><circle cx="895" cy="402" r="1.0" fill="rgb(33,33,33)"/><circle cx="921" cy="976" r="0.9" fill="rgb(32,32,32)"/><circle cx="1367" cy="592" r="0.9" fill="rgb(49,49,49)"/><circle cx="1323" cy="546" r="1.0" fill="rgb(27,27,27)"/><circle cx="131" cy="933" r="0.9" fill="rgb(39,39,39)"/><circle cx="995" cy="464" r="1.1" fill="rgb(39,39,39)"/><circle cx="296" cy="958" r="0.8" fill="rgb(22,22,22)"/><circle cx="1368" cy="773" r="0.9" fill="rgb(32,32,32)"/><circle cx="1109" cy="91" r="1.1" fill="rgb(51,51,51)"/><circle cx="1517" cy="637" r="0.8" fill="rgb(18,18,18)"/><circle cx="1534" cy="305" r="0.9" fill="rgb(62,62,62)"/><circle cx="760" cy="17" r="1.0" fill="rgb(136,136,136)"/><circle cx="1543" cy="497" r="1.0" fill="rgb(120,120,120)"/><circle cx="1605" cy="478" r="1.0" fill="rgb(96,96,96)"/><circle cx="1530" cy="826" r="1.0" fill="rgb(104,104,104)"/><circle cx="1562" cy="893" r="1.0" fill="rgb(96,96,96)"/><circle cx="1447" cy="80" r="1.0" fill="rgb(120,120,120)"/><circle cx="1480" cy="196" r="1.0" fill="rgb(88,88,88)"/><circle cx="1360" cy="858" r="1.0" fill="rgb(96,96,96)"/><circle cx="1210" cy="950" r="1.0" fill="rgb(80,80,80)"/><circle cx="1306" cy="930" r="1.0" fill="rgb(80,80,80)"/><circle cx="1180" cy="112" r="1.0" fill="rgb(88,88,88)"/><circle cx="760" cy="143" r="1.0" fill="rgb(88,88,88)"/><circle cx="1010" cy="140" r="1.0" fill="rgb(72,72,72)"/></g>
<circle cx="560" cy="559" r="360" fill="url(#glow)" mask="url(#lit)"/>
<g clip-path="url(#ec)">
<rect x="200" y="200" width="730" height="730" fill="url(#ocean)"/>
<g filter="url(#disp)">
<path d="M245 420 Q262 382 282 356 Q305 340 337 337 L332 322 Q338 310 362 306 Q440 300 540 300 Q620 300 680 300 L680 620 L600 560 L538 505 L528 528 Q480 535 445 540 L466 556 Q442 590 412 614 Q420 660 400 720 Q370 780 330 800 Q270 770 238 700 Q212 600 215 465Z" fill="#3a4a48" filter="url(#b12)"/>
<path d="M300 300 Q380 268 470 262 Q560 258 660 270 L680 300 L680 380 Q630 360 560 352 Q520 346 470 336 Q420 326 380 318 Q330 312 300 320Z" fill="#1a2a48" filter="url(#b12)"/>
<path d="M410 356 Q440 344 490 352 Q500 368 490 380 Q460 376 440 380 Q420 372 410 356Z" fill="#6c6a54" filter="url(#b3)"/>
<path d="M445 382 Q488 372 540 390 Q610 415 680 450 L680 540 Q620 500 570 500 Q535 495 523 476 Q500 470 481 431 L488 382Z" fill="#6e6454" filter="url(#b3)"/>
<path d="M505 405 Q560 398 610 430 Q632 470 600 500 Q560 492 532 470 Q508 440 505 405Z" fill="#8a7e6a" opacity=".7" filter="url(#b12)"/>
<path d="M550 345 Q610 345 680 380 L680 460 Q610 430 550 400Z" fill="#4a463c" opacity=".85" filter="url(#b12)"/>
<path d="M590 470 Q640 460 680 480 L680 600 Q640 560 600 520Z" fill="#3c4632" opacity=".8" filter="url(#b6)"/>
<path d="M215 465 Q300 468 360 500 Q420 530 450 570 Q440 620 420 660 Q400 720 350 780 Q280 760 240 680 Q210 600 215 465Z" fill="#34564c" filter="url(#b12)"/>
<path d="M250 620 Q300 640 360 650 Q400 700 380 780 Q330 800 280 760 Q250 700 250 620Z" fill="#506070" opacity=".55" filter="url(#b12)"/>
<path d="M245 420 Q262 382 282 356 Q305 340 337 337 L342 358 Q350 384 362 379 Q394 391 419 401 L404 430 Q398 480 396 515 Q360 510 322 490 Q282 478 243 466 Q238 432 245 420Z" fill="#dccfb4" filter="url(#b3)"/>
<path d="M262 398 Q312 358 380 392 Q404 432 390 488 Q340 496 290 470 Q250 444 262 398Z" fill="#f2ead8" filter="url(#b12)"/>
<ellipse cx="318" cy="392" rx="8" ry="16" fill="#7a6a88" opacity=".45" filter="url(#b3)"/>
<ellipse cx="314" cy="438" rx="7" ry="9" fill="#7a6a88" opacity=".45" filter="url(#b3)"/>
<ellipse cx="336" cy="400" rx="5" ry="6" fill="#7a6a88" opacity=".4" filter="url(#b2)"/>
<path d="M396 404 L404 416 Q398 470 396 515 L390 512 Q392 460 396 404Z" fill="#9a9070" opacity=".6" filter="url(#b2)"/>
<path d="M404 392 Q430 384 449 381 Q470 380 488 382 L481 431 Q500 470 523 476 L538 502 Q536 520 528 528 Q480 535 445 540 Q425 532 419 530 Q410 460 404 392Z" fill="#d2be9a" filter="url(#b3)"/>
<path d="M430 430 Q470 425 498 462 Q508 500 474 518 Q440 505 432 470Z" fill="#e4d4b4" opacity=".9" filter="url(#b6)"/>
<path d="M396 515 Q420 528 446 538 Q468 546 465 556 Q442 590 412 614 Q388 604 382 572Z" fill="#a0886a" filter="url(#b3)"/>
<g filter="url(#relief)" opacity=".55"><path d="M404 380 L540 380 L680 440 L680 600 L560 520 L470 560 L404 620Z" fill="#fff"/></g>
<g filter="url(#relief)" opacity=".25"><path d="M250 360 L400 360 L400 520 L250 470Z" fill="#fff"/></g>
<g filter="url(#reliefL)" opacity=".45"><path d="M492 386 L545 392 Q610 415 660 450 L660 520 Q600 510 560 500 Q530 490 523 476 Q500 470 481 431Z" fill="#fff"/></g>
<g filter="url(#relief)" opacity=".6"><path d="M492 386 L545 392 Q610 415 660 450 L660 520 Q600 510 560 500 Q530 490 523 476 Q500 470 481 431Z" fill="#fff"/></g>
<path d="M337 346 Q340 332 352 326 Q366 320 380 321 L388 336 Q398 346 409 346 Q414 356 416 362 Q430 372 439 376 L440 382 Q430 392 419 401 Q405 396 394 391 Q378 382 362 379 Q352 386 348 378 Q342 362 337 344Z" fill="#0c2460" filter="url(#b1)"/>
<path d="M399 416 L405 415 Q417 470 427 528 L420 530 Q408 470 399 416Z" fill="#0a1e50" filter="url(#b1)"/>
<ellipse cx="458" cy="337" rx="28" ry="14" fill="#0a2058" filter="url(#b1)"/>
<path d="M512 338 Q530 334 545 342 Q540 352 533 356 Q538 380 534 396 Q518 396 511 376 Q512 356 512 338Z" fill="#143a80" filter="url(#b1)"/>
<path d="M482 432 Q492 428 500 445 Q512 462 524 474 Q510 478 496 474 Q486 455 482 432Z" fill="#0a1e50" filter="url(#b1)"/>
<path d="M538 502 Q565 492 600 495 L680 530 L680 640 Q560 640 440 600 Q450 580 466 556 Q458 546 445 540 Q480 535 528 528Z" fill="#050b20" filter="url(#b3)"/>
<path d="M430 580 Q560 620 680 600 L680 760 Q560 720 440 700Z" fill="#050b20" opacity=".6" filter="url(#b24)"/>
<ellipse cx="340" cy="610" rx="5" ry="6" fill="#3fc8d8" filter="url(#b1)"/>
<path d="M410 720 L360 820 L430 830 L520 780Z" fill="#081638" opacity=".6" filter="url(#b12)"/>
<ellipse cx="408" cy="744" rx="9" ry="26" transform="rotate(22 408 744)" fill="#6a6058" opacity=".5" filter="url(#b2)"/>
</g>
<g filter="url(#cloudtex)">
<ellipse cx="285" cy="555" rx="80" ry="65" fill="#fff" fill-opacity="1"/>
<ellipse cx="245" cy="470" rx="22" ry="45" fill="#fff" fill-opacity="0.9"/>
<ellipse cx="385" cy="565" rx="25" ry="45" fill="#fff" fill-opacity="0.9"/>
<ellipse cx="395" cy="640" rx="25" ry="35" fill="#fff" fill-opacity="0.8"/>
<ellipse cx="515" cy="665" rx="45" ry="28" fill="#fff" fill-opacity="1"/>
<ellipse cx="585" cy="615" rx="50" ry="50" fill="#fff" fill-opacity="0.35"/>
<ellipse cx="320" cy="755" rx="40" ry="30" fill="#fff" fill-opacity="0.7"/>
<ellipse cx="250" cy="720" rx="25" ry="50" fill="#fff" fill-opacity="0.6"/>
<ellipse cx="230" cy="600" rx="20" ry="60" fill="#fff" fill-opacity="0.8"/>
</g>
<g filter="url(#cloudtex2)">
<ellipse cx="300" cy="545" rx="70" ry="50" fill="#fff" fill-opacity="1"/>
<ellipse cx="350" cy="600" rx="35" ry="35" fill="#fff" fill-opacity="0.9"/>
<ellipse cx="250" cy="640" rx="25" ry="40" fill="#fff" fill-opacity="0.7"/>
</g>
<g filter="url(#streaks)">
<ellipse cx="440" cy="240" rx="120" ry="25" fill="#fff" fill-opacity="0.9"/>
<ellipse cx="580" cy="290" rx="80" ry="20" fill="#fff" fill-opacity="0.6"/>
<ellipse cx="380" cy="300" rx="40" ry="30" fill="#fff" fill-opacity="0.6"/>
<ellipse cx="530" cy="730" rx="100" ry="16" fill="#fff" fill-opacity="0.55"/>
<ellipse cx="600" cy="860" rx="60" ry="20" fill="#fff" fill-opacity="0.4"/>
</g>
<path d="M414 793 Q470 815 520 848 Q548 868 572 886" stroke="#c8d4f0" stroke-width="12" fill="none" opacity=".55" filter="url(#b6)"/>
<path d="M420 795 Q470 815 520 846 Q546 864 566 880" stroke="#dde6f8" stroke-width="4" fill="none" opacity=".5" filter="url(#b2)"/>
<ellipse cx="660" cy="270" rx="170" ry="120" fill="#02040c" opacity=".6" filter="url(#b24)"/>
<rect x="200" y="200" width="730" height="730" fill="url(#night)"/>
<circle cx="560" cy="559" r="352" fill="url(#limb)" mask="url(#lit)" style="mix-blend-mode:screen"/>
</g>
</svg><!--/EARTH-->
<!--DESK--><svg class="a" style="left:17px;top:12px" width="42" height="38" viewBox="0 0 42 38">
<defs><linearGradient id="scr" x1="0" y1="0" x2="1" y2="1"><stop offset="0" stop-color="#3fd6e2"/><stop offset="1" stop-color="#1a7fd6"/></linearGradient>
<linearGradient id="stand" x1="0" y1="0" x2="0" y2="1"><stop offset="0" stop-color="#c8c8c8"/><stop offset="1" stop-color="#8a8a8a"/></linearGradient></defs>
<rect x="0" y="0" width="42" height="31" rx="1" fill="#d8d8d8"/>
<rect x="0.6" y="1.6" width="40.8" height="29" fill="url(#scr)"/>
<rect x="18" y="31" width="6" height="5" fill="url(#stand)"/>
<rect x="11" y="35" width="20" height="3" rx=".8" fill="#9a9a9a"/>
</svg>
<div class="t dl" style="left:0;width:76px;text-align:center;top:59.4px;font-size:12.5px">Этот</div>
<div class="t dl" style="left:0;width:76px;text-align:center;top:74.2px;font-size:12.5px">компьютер</div>

<svg class="a" style="left:20px;top:108px" width="36" height="42" viewBox="0 0 36 42">
<defs><linearGradient id="bin" x1="0" y1="0" x2="1" y2="0"><stop offset="0" stop-color="#c4c4c4"/><stop offset=".5" stop-color="#e2e2e2"/><stop offset="1" stop-color="#b8b8b8"/></linearGradient></defs>
<path d="M0 4.5 L3 0 H33 L36 4.5 L31.5 41.5 H4.5Z" fill="url(#bin)"/>
<path d="M3 1 H33 L35 4 H1Z" fill="#6a6a6a"/>
<path d="M0.5 4.6 H35.5 L35.2 6 H0.8Z" fill="#f4f4f4"/>
<path d="M4.7 36 H31.3 L30.9 41.5 H5.1Z" fill="#d8d8d8"/>
<g transform="translate(18 21.5)">
<g id="rarrow"><path d="M-6.5 -5.5 L-2.5 -10.5 Q0 -12 2 -10 L5.5 -4.5 L8 -6 L6.5 0 L0.5 -1.5 L3 -3 L0.5 -7.5 L-3 -3Z" fill="#1e8fe8"/><path d="M-6.5 -5.5 L-2.5 -10.5 Q-1 -11.5 0.5 -11 L-3 -3Z" fill="#0f6dc8"/></g>
<use href="#rarrow" transform="rotate(120)"/>
<use href="#rarrow" transform="rotate(240)"/>
</g>
</svg>
<div class="t dl" style="left:0;width:76px;text-align:center;top:157.0px;font-size:12.5px">Корзина</div>

<svg class="a" style="left:17px;top:209px" width="42" height="34" viewBox="0 0 42 34">
<defs><linearGradient id="ff209" x1="0" y1="0" x2="0" y2="1"><stop offset="0" stop-color="#ffe08a"/><stop offset="1" stop-color="#f8c437"/></linearGradient></defs>
<path d="M1.5 0 H14 Q15.2 0 16 .9 L19 4 H40.5 Q42 4 42 5.5 V32.5 Q42 34 40.5 34 H1.5 Q0 34 0 32.5 V1.5 Q0 0 1.5 0Z" fill="#eab536"/>
<path d="M0 5 H42 V18 H0Z" fill="#f4c84c"/>
<rect x="9.6" y="10" width="23.8" height="9" fill="#f6f6f6"/><path d="M17 15 l2-2 l1.5 1.5 l1.5-2" stroke="#777" stroke-width="1.3" fill="none"/>
<path d="M0 18.2 H42 V32.5 Q42 34 40.5 34 H1.5 Q0 34 0 32.5Z" fill="url(#ff209)"/>
</svg>
<div class="t dl" style="left:0;width:76px;text-align:center;top:255.1px;font-size:12.5px">Activation</div>

<svg class="a" style="left:17px;top:307px" width="42" height="34" viewBox="0 0 42 34">
<defs><linearGradient id="ff307" x1="0" y1="0" x2="0" y2="1"><stop offset="0" stop-color="#ffe08a"/><stop offset="1" stop-color="#f8c437"/></linearGradient></defs>
<path d="M1.5 0 H14 Q15.2 0 16 .9 L19 4 H40.5 Q42 4 42 5.5 V32.5 Q42 34 40.5 34 H1.5 Q0 34 0 32.5 V1.5 Q0 0 1.5 0Z" fill="#eab536"/>
<path d="M0 5 H42 V18 H0Z" fill="#f4c84c"/>
<circle cx="15" cy="17" r="7" fill="#f4f0ee"/><path d="M11 15 L17 20" stroke="#c8502a" stroke-width="2.2"/><circle cx="27" cy="13" r="5.6" fill="#1ea446"/><path d="M27 9.5 V15.5 M24.5 13.5 L27 16 L29.5 13.5" stroke="#fff" stroke-width="1.6" fill="none"/>
<path d="M0 18.2 H42 V32.5 Q42 34 40.5 34 H1.5 Q0 34 0 32.5Z" fill="url(#ff307)"/>
</svg>
<div class="t dl" style="left:0;width:76px;text-align:center;top:353.2px;font-size:12.5px">Browser</div>
<div class="t dl" style="left:0;width:76px;text-align:center;top:368.0px;font-size:12.5px">Install</div>

<svg class="a" style="left:17px;top:405px" width="42" height="34" viewBox="0 0 42 34">
<defs><linearGradient id="ff405" x1="0" y1="0" x2="0" y2="1"><stop offset="0" stop-color="#ffe08a"/><stop offset="1" stop-color="#f8c437"/></linearGradient></defs>
<path d="M1.5 0 H14 Q15.2 0 16 .9 L19 4 H40.5 Q42 4 42 5.5 V32.5 Q42 34 40.5 34 H1.5 Q0 34 0 32.5 V1.5 Q0 0 1.5 0Z" fill="#eab536"/>
<path d="M0 5 H42 V18 H0Z" fill="#f4c84c"/>
<rect x="9" y="6" width="24" height="13" fill="#f0d07a" opacity=".6"/><rect x="18" y="14" width="6" height="2.5" fill="#333"/>
<path d="M0 18.2 H42 V32.5 Q42 34 40.5 34 H1.5 Q0 34 0 32.5Z" fill="url(#ff405)"/>
</svg>
<div class="t dl" style="left:0;width:76px;text-align:center;top:451.4px;font-size:12.5px">Runtimes</div>

<svg class="a" style="left:14px;top:497px" width="48" height="48" viewBox="0 0 48 48">
<defs>
<linearGradient id="eg1" x1="0" y1="0.2" x2="1" y2="0.7"><stop offset="0" stop-color="#2fa8ec"/><stop offset=".55" stop-color="#2dc6c8"/><stop offset="1" stop-color="#55d552"/></linearGradient>
<linearGradient id="eg2" x1="0" y1="0" x2="1" y2="1"><stop offset="0" stop-color="#1a8ee0"/><stop offset="1" stop-color="#1d56b0"/></linearGradient>
</defs>
<path d="M0.5 23 C1 9 11 0.5 24 0.5 C38 0.5 47.5 10 47.5 21.5 C47.5 30 41 35.5 34.5 35.5 C30.5 35.5 28.5 33 29.5 30 C31 27.5 31 24 28.5 21 C25 17 18 15.5 11 17.5 C6 19 2 22 0.5 25Z" fill="url(#eg1)"/>
<path d="M0.5 25 C2 22 6 19 11 17.5 C18 15.5 25 17 28.5 21 C26 19.5 21 19.5 19 23 C16.5 27.5 18.5 37 27 40.5 C34 43 40.5 40 43.5 37 C40 44 32.5 47.5 24 47.5 C10 47.5 0.5 37.5 0.5 25Z" fill="url(#eg2)"/>
<circle cx="24.3" cy="25.6" r="5.8" fill="#000"/>
<path d="M30 30 C33 34 40 35.5 44 33 L43 37 C38 41 30 41 27 38Z" fill="#000" opacity=".0"/>
<rect x="0" y="35" width="13" height="13" rx="1" fill="#fafafa"/>
<path d="M3.5 44.5 L9.5 38.5 M5.5 38.5 H9.5 V42.5" stroke="#2a6fc0" stroke-width="1.6" fill="none"/>
</svg>
<div class="t dl" style="left:0;width:76px;text-align:center;top:549.4px;font-size:12.5px">Microsoft</div>
<div class="t dl" style="left:0;width:76px;text-align:center;top:564.2px;font-size:12.5px">Edge</div>
<!--/DESK-->

<!-- TASK MANAGER WINDOW -->
<div id="win"></div>
<div class="a" style="left:685px;top:260px;width:715px;height:529px;background:#fff;border-left:1px solid #e9e9e9;border-top:1px solid #e9e9e9;border-top-left-radius:8px"></div>
<div class="a" style="left:686px;top:310px;width:714px;height:1px;background:#ebebeb"></div>
<div class="a" style="left:1349px;top:269px;width:1px;height:31px;background:#ebebeb"></div>
<svg class="a" style="left:654px;top:225px" width="16" height="12" viewBox="0 0 24 17.6">
<rect x="0" y="0" width="24" height="17.6" fill="#a6e0fb"/>
<path d="M0 0H24V5.6H19.2Q18 3.1 16.5 3.1Q15 3.1 12.25 8.3Q9 3.1 6.06 3.1Q4 3.1 3 6 L0 7.05Z" fill="#0d64b6"/>
<path d="M0 7.05L3 6Q4 3.1 6.06 3.1Q9 3.1 12.25 8.3Q15 3.1 16.5 3.1Q18 3.1 19.2 5.6H24V10H19.2Q18 6.8 16.5 6.8Q14.5 6.8 11.75 13Q9 6.8 6.06 6.8Q4.3 6.8 3.6 11.75H0Z" fill="#2a9de0"/>
</svg>
<div class="t " style="left:692px;top:229.4px;font-size:12px;">Диспетчер задач</div>
<div class="a" style="left:1281px;top:222px;width:10px;height:1px;background:#1b1b1b"></div>
<div class="a" style="left:1326px;top:217px;width:10px;height:10px;border:1px solid #1b1b1b;border-radius:1.5px"></div>
<svg class="a" style="left:1372px;top:217px" width="10" height="10" viewBox="0 0 10 10"><path d="M0 0L10 10M10 0L0 10" stroke="#1b1b1b" stroke-width="1"/></svg>
<div class="t " style="left:701.5px;top:278.0px;font-size:14px;letter-spacing:0.1px;-webkit-text-stroke:0.4px #1b1b1b">Производительность</div>
<svg class="a" style="left:1176px;top:274px" width="22" height="20" viewBox="0 0 22 20" fill="none" stroke="#1b1b1b" stroke-width="1.05" stroke-linecap="round">
<path d="M7.6 15.4H5Q3.4 15.4 3.4 13.8V5Q3.4 3.4 5 3.4H14Q15.6 3.4 15.6 5V7.4M3.4 9.3H8Q9.5 9.3 9.5 7.8V3.4"/>
<circle cx="13.5" cy="13.3" r="4.5" fill="#1b1b1b" stroke="none"/>
<path d="M13.5 11.1V15.5M11.3 13.3H15.7" stroke="#fff" stroke-width="1.2"/>
</svg>
<div class="t " style="left:1202px;top:278.6px;font-size:12px;letter-spacing:-0.12px">Запустить новую задачу</div>
<div class="a" style="left:1366px;top:283.5px;width:3px;height:3px;border-radius:50%;background:#1b1b1b"></div>
<div class="a" style="left:1372.5px;top:283.5px;width:3px;height:3px;border-radius:50%;background:#1b1b1b"></div>
<div class="a" style="left:1379px;top:283.5px;width:3px;height:3px;border-radius:50%;background:#1b1b1b"></div>
<div class="a" style="left:640px;top:345px;width:40px;height:36px;background:#eaeaea;border-radius:5px"></div>
<div class="a" style="left:640px;top:355px;width:3px;height:16px;background:#0e62ad;border-radius:2px"></div>
<!--ICONS--><svg class="a" style="left:648px;top:271px" width="24" height="24" viewBox="0 0 24 24" fill="none" stroke="#1b1b1b" stroke-width="1.05" stroke-linecap="round" stroke-linejoin="round"><path d="M5 7.5H19.2M5 12.3H19.2M5 16.5H19.2"/></svg>
<svg class="a" style="left:648px;top:310px" width="24" height="24" viewBox="0 0 24 24" fill="none" stroke="#1b1b1b" stroke-width="1.05" stroke-linecap="round" stroke-linejoin="round"><path d="M7.3 6.5H15.8Q17.3 6.5 17.3 8V11Q17.3 12.5 15.8 12.5H11.4V16.6Q11.4 18.1 9.9 18.1H7.3Q5.8 18.1 5.8 16.6V8Q5.8 6.5 7.3 6.5ZM5.8 12.5H11.4M11.4 6.5V12.5"/></svg>
<svg class="a" style="left:648px;top:351px" width="24" height="24" viewBox="0 0 24 24" fill="none" stroke="#1b1b1b" stroke-width="1.05" stroke-linecap="round" stroke-linejoin="round"><rect x="5.6" y="5.4" width="12.8" height="13.1" rx="2.2"/><path d="M7.3 12.5H9.5L10.8 8.6 13.2 15.3 14.6 12.5H16.8"/></svg>
<svg class="a" style="left:648px;top:391px" width="24" height="24" viewBox="0 0 24 24" fill="none" stroke="#1b1b1b" stroke-width="1.05" stroke-linecap="round" stroke-linejoin="round"><path d="M6.3 7.6A7.5 7.5 0 1 1 4.6 12.2M5.5 4.3V8.4H9.5M11.5 7.3V12.4H14.7"/></svg>
<svg class="a" style="left:648px;top:430px" width="24" height="24" viewBox="0 0 24 24" fill="none" stroke="#1b1b1b" stroke-width="1.05" stroke-linecap="round" stroke-linejoin="round"><path d="M4.3 12.4Q7 7.2 12 7.2Q17 7.2 19.7 12.4M5.4 10.8L7.5 12.4M18.6 10.8L16.5 12.4M15.9 8.4Q13.5 13 11.4 16Q11 17.5 12.3 17.5Q13.4 17.2 13.7 15.8Q14.8 12 15.9 8.4Z"/><path d="M12 8.4V10" stroke="#888"/></svg>
<svg class="a" style="left:648px;top:471px" width="24" height="24" viewBox="0 0 24 24" fill="none" stroke="#1b1b1b" stroke-width="1.05" stroke-linecap="round" stroke-linejoin="round"><circle cx="9.4" cy="7.3" r="3"/><circle cx="16.5" cy="8.5" r="2.1"/><path d="M5.3 12.5H13.8Q14.5 12.5 14.5 13.2Q14.5 18.4 9.6 18.4Q4.6 18.4 4.6 13.2Q4.6 12.5 5.3 12.5ZM16.3 12.5H18.8Q19.5 12.5 19.5 13.3Q19.5 17.5 15.4 17.6"/></svg>
<svg class="a" style="left:648px;top:511px" width="24" height="24" viewBox="0 0 24 24" fill="none" stroke="#1b1b1b" stroke-width="1.05" stroke-linecap="round" stroke-linejoin="round"><path d="M8.2 7.4H19.7M8.2 11.4H19.7M8.2 15.5H19.7"/><circle cx="4.9" cy="7.4" r=".5" stroke-width="1.4"/><circle cx="4.9" cy="11.4" r=".5" stroke-width="1.4"/><circle cx="4.9" cy="15.5" r=".5" stroke-width="1.4"/></svg>
<svg class="a" style="left:648px;top:551px" width="24" height="24" viewBox="0 0 24 24" fill="none" stroke="#1b1b1b" stroke-width="1.05" stroke-linecap="round" stroke-linejoin="round"><path d="M8.7 6.3H11.1C11.4 4.6 12.2 4.2 13.1 4.2C14 4.2 14.8 4.6 15.1 6.3H17.3Q18.5 6.3 18.5 7.5V10.2C16.6 10.4 15.8 11.1 15.8 12C15.8 12.9 16.6 13.6 18.5 13.8V16.3Q18.5 17.5 17.3 17.5H14.8C14.5 19.2 13.7 19.6 12.8 19.6C11.9 19.6 11.1 19.2 10.8 17.5H8.7Q7.5 17.5 7.5 16.3V13.7C5.8 13.4 5.3 12.7 5.3 11.9C5.3 11.1 5.8 10.4 7.5 10.1V7.5Q7.5 6.3 8.7 6.3Z"/></svg>
<svg class="a" style="left:648px;top:753px" width="24" height="24" viewBox="0 0 24 24" fill="none" stroke="#1b1b1b" stroke-width="1.05" stroke-linecap="round" stroke-linejoin="round"><path d="M14.50 7.67 L13.71 7.30 L13.34 5.13 L10.66 5.13 L10.29 7.30 L9.50 7.67 L8.79 8.17 L6.72 7.41 L5.38 9.72 L7.08 11.13 L7.00 12.00 L7.08 12.87 L5.38 14.28 L6.72 16.59 L8.79 15.83 L9.50 16.33 L10.29 16.70 L10.66 18.87 L13.34 18.87 L13.71 16.70 L14.50 16.33 L15.21 15.83 L17.28 16.59 L18.62 14.28 L16.92 12.87 L17.00 12.00 L16.92 11.13 L18.62 9.72 L17.28 7.41 L15.21 8.17Z"/><circle cx="12" cy="12" r="1.7"/></svg>
<div class="a" style="left:689px;top:318px;width:204px;height:60px;background:#f5f5f5;border-radius:4px"></div>
<div class="a" style="left:699px;top:328px;width:60px;height:40px;background:#fff;border:1px solid #6e6e6e"></div>
<div class="a" style="left:699px;top:388px;width:60px;height:40px;background:#fff;border:1px solid #6e6e6e"></div>
<div class="a" style="left:700px;top:425px;width:58px;height:2px;background:#cfe3f5;border-top:1px solid #2f5f8f"></div>
<div class="a" style="left:699px;top:448px;width:60px;height:46px;background:#fff;border:1px solid #6e6e6e"></div>
<svg class="a" style="left:740px;top:489px" width="10" height="4"><path d="M1 4L2.5 1 4 4 5.5 1 7 4" fill="none" stroke="#7c7c3c" stroke-width="1"/></svg>
<div class="t " style="left:769.5px;top:327.2px;font-size:15px;">ЦП</div>
<div class="t g" style="left:769.5px;top:346.3px;font-size:11.5px;">0%&nbsp; 3,09 ГГц</div>
<div class="t " style="left:769.5px;top:387.8px;font-size:15px;">Память</div>
<div class="t g" style="left:769.5px;top:406.4px;font-size:11.5px;">2,1/31,9 ГБ (7%)</div>
<div class="t " style="left:769.5px;top:447.3px;font-size:15px;letter-spacing:-0.1px">Диск 0 (C: D:)</div>
<div class="t g" style="left:769.5px;top:465.9px;font-size:11.5px;">SSD (NVMe)</div>
<div class="t g" style="left:769.5px;top:481.3px;font-size:11.5px;">0%</div>
<div class="t " style="left:922px;top:328.3px;font-size:28px;letter-spacing:-1.8px">ЦП</div>
<div class="t " style="right:304px;top:339.2px;font-size:15px;">Intel(R) Xeon(R) CPU E5-2689 0 @ 2.60GHz</div>
<div class="t g" style="left:923.5px;top:365.7px;font-size:11px;">Используется %</div>
<div class="t g" style="right:304px;top:365.5px;font-size:11px;">100%</div>
<div class="a" style="left:923px;top:380px;width:453px;height:219px;border:1px solid #8a8a8a;background:#fff"><div class="a" style="left:0;top:0;width:451px;height:217px;overflow:hidden"><div class="a" style="left:30.2px;top:0;width:1px;height:217px;background:#e9e9e9"></div><div class="a" style="left:60.8px;top:0;width:1px;height:217px;background:#e9e9e9"></div><div class="a" style="left:91.4px;top:0;width:1px;height:217px;background:#e9e9e9"></div><div class="a" style="left:122.1px;top:0;width:1px;height:217px;background:#e9e9e9"></div><div class="a" style="left:152.7px;top:0;width:1px;height:217px;background:#e9e9e9"></div><div class="a" style="left:183.3px;top:0;width:1px;height:217px;background:#e9e9e9"></div><div class="a" style="left:213.9px;top:0;width:1px;height:217px;background:#e9e9e9"></div><div class="a" style="left:244.5px;top:0;width:1px;height:217px;background:#e9e9e9"></div><div class="a" style="left:275.2px;top:0;width:1px;height:217px;background:#e9e9e9"></div><div class="a" style="left:305.8px;top:0;width:1px;height:217px;background:#e9e9e9"></div><div class="a" style="left:336.4px;top:0;width:1px;height:217px;background:#e9e9e9"></div><div class="a" style="left:367.0px;top:0;width:1px;height:217px;background:#e9e9e9"></div><div class="a" style="left:397.6px;top:0;width:1px;height:217px;background:#e9e9e9"></div><div class="a" style="left:428.3px;top:0;width:1px;height:217px;background:#e9e9e9"></div><div class="a" style="left:0;top:21.8px;width:451px;height:1px;background:#e9e9e9"></div><div class="a" style="left:0;top:43.5px;width:451px;height:1px;background:#e9e9e9"></div><div class="a" style="left:0;top:65.2px;width:451px;height:1px;background:#e9e9e9"></div><div class="a" style="left:0;top:87.0px;width:451px;height:1px;background:#e9e9e9"></div><div class="a" style="left:0;top:108.8px;width:451px;height:1px;background:#e9e9e9"></div><div class="a" style="left:0;top:130.5px;width:451px;height:1px;background:#e9e9e9"></div><div class="a" style="left:0;top:152.2px;width:451px;height:1px;background:#e9e9e9"></div><div class="a" style="left:0;top:174.0px;width:451px;height:1px;background:#e9e9e9"></div><div class="a" style="left:0;top:195.8px;width:451px;height:1px;background:#e9e9e9"></div><svg class="a" style="left:0;top:0" width="451" height="217"><path d="M0 217 L0 211.5 L12 216.5 L14 217Z M93 217 L98.5 215.5 L104 217Z M125 217 L129.5 215.5 L134 217Z M148 217 L153.0 215.5 L158 217Z M245 217 L251.5 212.5 L258 217Z M262 217 L267.5 215.5 L273 217Z M384 217 L390.0 213.5 L396 217Z M308 217 Q324 215 341 217Z" fill="#cfe8f8" stroke="#3a8fc4" stroke-width="1"/></svg></div></div>
<div class="t g" style="left:923.5px;top:602.5px;font-size:11px;">60 секунд</div>
<div class="t g" style="right:304px;top:602.5px;font-size:11px;">0</div>
<div class="t g" style="left:923.5px;top:625.5px;font-size:12px;">Использование</div>
<div class="t g" style="left:1029.5px;top:625.5px;font-size:12px;">Скорость</div>
<div class="t " style="left:923px;top:645.8px;font-size:18.5px;">0%</div>
<div class="t " style="left:1029.5px;top:645.8px;font-size:18.5px;">3,09 ГГц</div>
<div class="t g" style="left:923.5px;top:676.9px;font-size:12px;">Процессы</div>
<div class="t g" style="left:1000.5px;top:676.9px;font-size:12px;">Потоки</div>
<div class="t g" style="left:1064px;top:676.9px;font-size:12px;">Дескрипторы</div>
<div class="t " style="left:923px;top:696.7px;font-size:18.5px;">72</div>
<div class="t " style="left:1000.5px;top:696.7px;font-size:18.5px;letter-spacing:0.6px">1316</div>
<div class="t " style="left:1064px;top:696.7px;font-size:18.5px;letter-spacing:0.5px">32473</div>
<div class="t g" style="left:923.5px;top:727.6px;font-size:12px;">Время работы</div>
<div class="t " style="left:923px;top:748.1px;font-size:18.5px;">0:00:01:23</div>
<div class="t g" style="left:1151.5px;top:625.9px;font-size:12px;letter-spacing:-0.22px">Базовая скорость:</div>
<div class="t " style="left:1308.3px;top:625.9px;font-size:11.5px;">2,60 ГГц</div>
<div class="t g" style="left:1151.5px;top:643.8px;font-size:12px;letter-spacing:-0.22px">Сокетов:</div>
<div class="t " style="left:1308.3px;top:643.8px;font-size:11.5px;">1</div>
<div class="t g" style="left:1151.5px;top:661.8px;font-size:12px;letter-spacing:-0.22px">Ядра:</div>
<div class="t " style="left:1308.3px;top:661.8px;font-size:11.5px;">8</div>
<div class="t g" style="left:1151.5px;top:679.7px;font-size:12px;letter-spacing:0.15px">Логических процессоров:</div>
<div class="t " style="left:1308.3px;top:679.7px;font-size:11.5px;">16</div>
<div class="t g" style="left:1151.5px;top:697.7px;font-size:12px;letter-spacing:-0.22px">Виртуализация:</div>
<div class="t " style="left:1308.3px;top:697.7px;font-size:11.5px;">Включено</div>
<div class="t g" style="left:1151.5px;top:715.6px;font-size:12px;letter-spacing:-0.22px">Кэш L1:</div>
<div class="t " style="left:1308.3px;top:715.6px;font-size:11.5px;">512 КБ</div>
<div class="t g" style="left:1151.5px;top:733.6px;font-size:12px;letter-spacing:-0.22px">Кэш L2:</div>
<div class="t " style="left:1308.3px;top:733.6px;font-size:11.5px;">2,0 МБ</div>
<div class="t g" style="left:1151.5px;top:751.5px;font-size:12px;letter-spacing:-0.22px">Кэш L3:</div>
<div class="t " style="left:1308.3px;top:751.5px;font-size:11.5px;">20,0 МБ</div>


<!-- TASKBAR -->
<div id="tb"></div>
<svg class="a" style="left:21px;top:1015px" width="23" height="23" viewBox="0 0 23 23">
<defs><linearGradient id="wl" x1="0" y1="0" x2="1" y2="1"><stop offset="0" stop-color="#3fcbf9"/><stop offset="1" stop-color="#0a67c9"/></linearGradient></defs>
<path d="M1.2 0H10.9V10.9H0V1.2Q0 0 1.2 0ZM12.1 0H21.8Q23 0 23 1.2V10.9H12.1ZM0 12.1H10.9V23H1.2Q0 23 0 21.8ZM12.1 12.1H23V21.8Q23 23 21.8 23H12.1Z" fill="url(#wl)"/>
</svg>
<div class="a" style="left:58px;top:1010px;width:218px;height:31px;border-radius:16px;background:#fafafa;border:1px solid #e1e1e1;border-bottom-color:#d4d4d4"></div>
<svg class="a" style="left:68px;top:1018px" width="16" height="16" viewBox="0 0 16 16" fill="none" stroke="#1f1f1f" stroke-width="1.6" stroke-linecap="round"><circle cx="6.9" cy="6.9" r="5.2"/><path d="M10.6 10.6L14.6 14.6"/></svg>
<div class="t" style="left:94.5px;top:1018.9px;font-size:14px;color:#5a5a5a;">Поиск</div>
<svg class="a" style="left:288px;top:1014px" width="26" height="24" viewBox="0 0 26 24">
<defs><linearGradient id="tvl" x1="0" y1="0" x2="1" y2="1"><stop offset="0" stop-color="#ffffff"/><stop offset="1" stop-color="#dedede"/></linearGradient>
<linearGradient id="tvd" x1="0" y1="0" x2="0" y2="1"><stop offset="0" stop-color="#3a3a3a"/><stop offset="1" stop-color="#111"/></linearGradient>
<linearGradient id="tvm" x1="0" y1="0" x2="1" y2="1"><stop offset="0" stop-color="#d0d0d0"/><stop offset="1" stop-color="#9a9a9a"/></linearGradient></defs>
<rect x="1" y="7" width="18" height="16" rx="1.3" fill="url(#tvd)"/>
<rect x="7" y="1" width="17.3" height="15.5" rx="1.3" fill="url(#tvl)" stroke="#e4e4e4" stroke-width=".5"/>
<rect x="7" y="7" width="12" height="9.5" fill="url(#tvm)"/>
</svg>
<svg class="a" style="left:333px;top:1015px" width="24" height="21" viewBox="0 0 24 21">
<path d="M0 1.2Q0 0 1.2 0H7.5Q8.5 0 9.2 .8L10.3 2.4H0Z" fill="#e0a418"/>
<path d="M0 4.8V19.8Q0 21 1.2 21H22.8Q24 21 24 19.8V3.6Q24 2.4 22.8 2.4H10.5L9 4.8Z" fill="#fcd04a"/>
<path d="M0 4.8H9L10.5 2.4H24V8H0Z" fill="#fddf74" opacity=".6"/>
<path d="M4.3 21V16.5Q4.3 14.4 6.4 14.4H16.9Q19 14.4 19 16.5V21Z" fill="#1b78d0"/>
</svg>
<div class="a" style="left:370px;top:1007px;width:38px;height:38px;border-radius:5px;background:#f8f8f8;border:1px solid #e8e8e8"></div>
<svg class="a" style="left:377px;top:1017px" width="24" height="17.6" viewBox="0 0 24 17.6">
<defs><linearGradient id="tml" x1="0" y1="0" x2="0" y2="1"><stop offset="0" stop-color="#b4ecfd"/><stop offset="1" stop-color="#8ccff3"/></linearGradient></defs>
<rect x="0" y="0" width="24" height="17.6" rx="1.6" fill="url(#tml)"/>
<path d="M1.6 0H22.4Q24 0 24 1.6V5.6H19.2Q18 3.1 16.5 3.1Q15 3.1 12.25 8.3Q9 3.1 6.06 3.1Q4 3.1 3 6 L0 7.05V1.6Q0 0 1.6 0Z" fill="#0d60b0"/>
<path d="M0 7.05L3 6Q4 3.1 6.06 3.1Q9 3.1 12.25 8.3Q15 3.1 16.5 3.1Q18 3.1 19.2 5.6H24V10H19.2Q18 6.8 16.5 6.8Q14.5 6.8 11.75 13Q9 6.8 6.06 6.8Q4.3 6.8 3.6 11.75H0Z" fill="#2a9de0"/>
</svg>
<div class="a" style="left:381px;top:1042px;width:16px;height:3px;border-radius:2px;background:#0f6cbd"></div>
<svg class="a" style="left:1416px;top:1020px" width="16" height="12" viewBox="0 0 16 12" fill="none" stroke="#1b1b1b" stroke-width="1.05" stroke-linecap="round"><path d="M3.1 7.9L7.9 3.4 12.6 7.9"/></svg>
<svg class="a" style="left:1446px;top:1018px" width="20" height="16" viewBox="0 0 20 16">
<defs><linearGradient id="cg" x1="0" y1="0" x2="0" y2="1"><stop offset="0" stop-color="#6a6a6a"/><stop offset="1" stop-color="#dcdcdc"/></linearGradient></defs>
<path d="M5.5 12.7H15.5Q18 12.7 17.5 9.5Q17.3 7.6 15.3 6.9Q14.6 2.3 10.6 2.4Q8.1 2.6 7 4.5Q2.6 4.8 2.3 8.8Q2.3 12.7 5.5 12.7Z" fill="url(#cg)" stroke="#111" stroke-width="1.1"/>
<path d="M2.6 2.1L16.5 14.8" stroke="#111" stroke-width="1.2" stroke-linecap="round"/>
<path d="M3.6 1.3L17.5 14" stroke="#efefef" stroke-width=".8"/>
</svg>
<div class="t" style="left:1484.5px;top:1020.5px;font-size:12px;color:#1b1b1b;letter-spacing:-1px;transform:scaleX(.93);transform-origin:left">РУС</div>
<svg class="a" style="left:1522px;top:1016px" width="20" height="20" viewBox="0 0 20 20" fill="none" stroke="#1b1b1b" stroke-width="1.05">
<path d="M12.3 17.1A7.4 7.4 0 1 1 17.2 9.5"/>
<path d="M9.8 2.4Q6.6 5.3 6.6 9.7Q6.6 14 9.5 17M9.8 2.4Q12.6 5 13 8.5M3.2 7H16.6M2.6 12.4H7.4"/>
<circle cx="13.4" cy="13.5" r="4.1"/><path d="M10.7 16.2L16.1 10.8"/>
</svg>
<svg class="a" style="left:1546px;top:1018px" width="22" height="16" viewBox="0 0 22 16" fill="none" stroke="#1b1b1b" stroke-width="1.05" stroke-linejoin="round" stroke-linecap="round">
<path d="M2.6 5.5H4.7L8.6 2.5V13.5L4.7 10.6H2.6Q2 10.6 2 10V6.1Q2 5.5 2.6 5.5Z"/>
<path d="M11.3 6Q12.6 8 11.3 10.2M13.4 4Q16 8 13.4 12.3"/>
<path d="M15.7 3.2Q18.6 8 15.7 12.9" stroke="#bbb"/>
</svg>
<div class="t" style="right:43px;top:1011.5px;font-size:12px;color:#1b1b1b;letter-spacing:-0.45px">19:00</div>
<div class="t" style="right:43px;top:1027.5px;font-size:12px;color:#1b1b1b;letter-spacing:-0.37px">11.02.2026</div>
<svg class="a" style="left:1644px;top:1017px" width="18" height="18" viewBox="0 0 18 18">
<path d="M7.5 2Q3.4 2.3 3.1 6.6V11.2L1.8 13.2Q1.5 14 2.3 14H13.3Q14.1 14 13.8 13.2L12.6 11.2V8" fill="#111"/>
<path d="M6.2 16Q7.8 17.6 9.4 16Z" fill="#111" stroke="#111" stroke-width="1"/>
<path d="M5.4 7.2H9L5.4 11.4H9" fill="none" stroke="#efefef" stroke-width="1.2"/>
<path d="M10.1 2.6H13.6L10.1 6.4H13.6" fill="none" stroke="#111" stroke-width="1.3"/>
</svg>

</body></html>
